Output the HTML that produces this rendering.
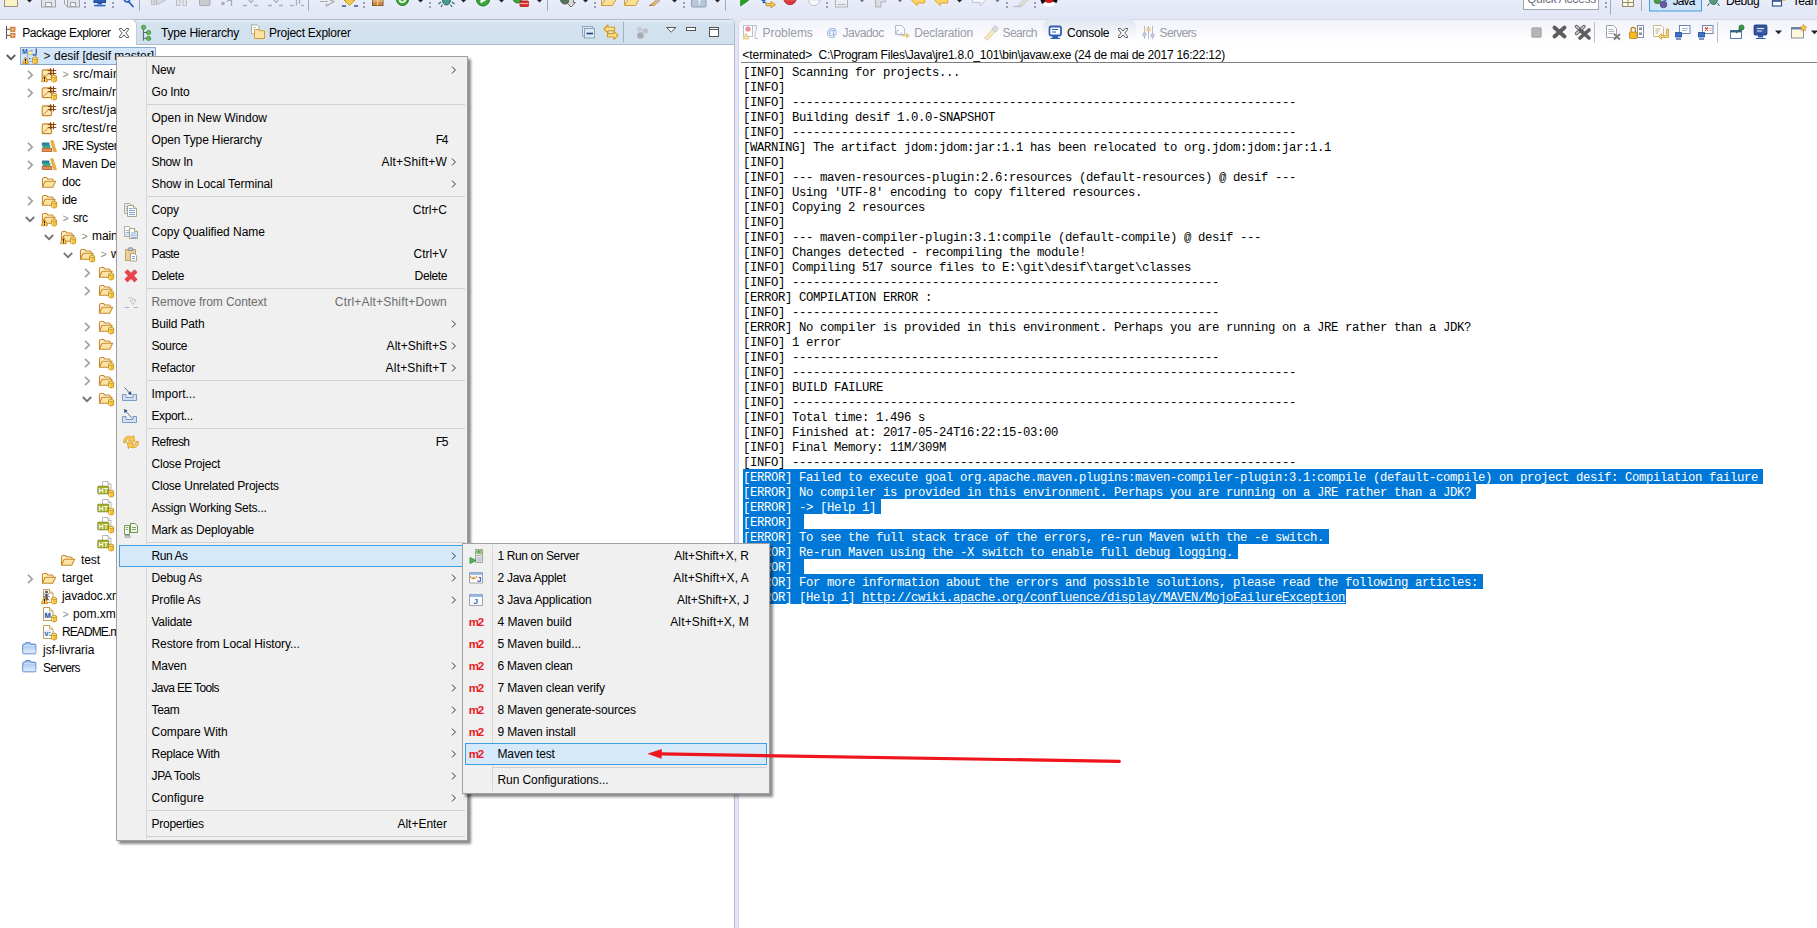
<!DOCTYPE html>
<html><head><meta charset="utf-8"><title>Eclipse</title><style>
html,body{margin:0;padding:0}
body{width:1817px;height:928px;overflow:hidden;position:relative;background:#e1e6f6;font-family:"Liberation Sans",sans-serif;font-size:12px}
.t{position:absolute;white-space:pre}
.ic{position:absolute;width:16px;height:16px}
.ic svg{display:block;overflow:visible}
.abs{position:absolute}
.cl{position:absolute;left:743px;margin-top:2px;white-space:pre;font-family:"Liberation Mono",monospace;font-size:12.300px;letter-spacing:-0.380px;line-height:15px;height:15px;color:#000}
</style></head><body>
<div class="abs" style="left:0;top:0;width:1817px;height:20px;background:linear-gradient(#e9ecf9,#e1e5f5)"></div><svg class="abs" style="left:0;top:0" width="1817" height="20" viewBox="0 0 1817 20"><rect x="4.500" y="-3" width="13" height="9.500" fill="#fbf3c8" stroke="#9b9480" stroke-width="1"/><path d="M27.0 0h5l-2.500 2.600z" fill="#222"/><rect x="41.500" y="-3" width="14" height="10" fill="#e3e4e8" stroke="#a0a2aa" stroke-width="1"/><rect x="45.500" y="2.500" width="6" height="4" fill="#f4f4f6" stroke="#a0a2aa" stroke-width="1"/><path d="M64.500 -3v7l3 2.500" fill="none" stroke="#a0a2aa" stroke-width="1"/><rect x="67.500" y="-3" width="12" height="10" fill="#e3e4e8" stroke="#a0a2aa" stroke-width="1"/><rect x="70.500" y="2.500" width="5" height="4" fill="#f4f4f6" stroke="#a0a2aa" stroke-width="1"/><rect x="84" y="2" width="2" height="2" fill="#9a9fb0"/><rect x="84" y="6" width="2" height="2" fill="#9a9fb0"/><rect x="94" y="-3" width="11.500" height="5.500" fill="#2b5fb8" stroke="#1f4a98" stroke-width="1"/><rect x="97.500" y="3" width="4.500" height="1.500" fill="#2b5fb8"/><rect x="94" y="4.800" width="11.500" height="1.600" fill="#3a6fc8"/><rect x="112" y="2" width="2" height="2" fill="#9a9fb0"/><rect x="112" y="6" width="2" height="2" fill="#9a9fb0"/><path d="M124.500 .5a3.500 3.500 0 0 0 5 .5M128.500 1.500l4.500 5" fill="none" stroke="#2b5fb8" stroke-width="1.800" stroke-linecap="round"/><path d="M139.5 0V10.5" stroke="#a3a7b8" stroke-width="1"/><path d="M151.500 -2v6.500h3.500v-6.500zM156.500 -2v7l9.500-5z" fill="#d9dae0" stroke="#b0b2ba" stroke-width=".8"/><path d="M176.500 -2v7.500h3.500v-7.500zM183 -2v7.500h3.500v-7.500z" fill="#e3e4e8" stroke="#b0b2ba" stroke-width=".8"/><rect x="199.500" y="-3" width="10.500" height="8.500" rx="1" fill="#c9cad0" stroke="#a9abb3" stroke-width="1"/><circle cx="223" cy="3.500" r="1.800" fill="#a9abb3"/><path d="M226.500 1.500l5-2v6.500" fill="none" stroke="#a9abb3" stroke-width="1.300"/><path d="M243 5.500h4M254 5.500h4M248 -1l3 3.500 3-3.500" fill="none" stroke="#b0b2ba" stroke-width="1.300"/><path d="M268 5.500h4M279 5.500h4M273 -1l3 3.500 3-3.500" fill="none" stroke="#b0b2ba" stroke-width="1.300"/><path d="M290 5.500h4M296.500 -1v6.500M299.500 -1v5" fill="none" stroke="#b0b2ba" stroke-width="1.300"/><path d="M301 5.500h3" stroke="#b0b2ba" stroke-width="1.300"/><path d="M308.5 0V10.5" stroke="#a3a7b8" stroke-width="1"/><path d="M320 1.500h8M326.500 -1.500l7.500 3-7.500 4.500v-2.500" fill="#eceef4" stroke="#a9abb3" stroke-width="1.200" stroke-linejoin="round"/><path d="M346.500 -2h6l0 2h2.500l-5.500 5.500-5.500-5.500h2.500z" fill="#f6c94c" stroke="#c28a13" stroke-width=".8"/><path d="M342 6h4M354 6h4" stroke="#35568c" stroke-width="1.400"/><rect x="363" y="2" width="2" height="2" fill="#9a9fb0"/><rect x="363" y="6" width="2" height="2" fill="#9a9fb0"/><rect x="372.500" y="-3" width="10.500" height="8.500" fill="#c98a4a" stroke="#8a5520" stroke-width="1"/><path d="M377.700 -3v8.500M372.500 1h10.500" stroke="#f3d3a3" stroke-width="1"/><circle cx="402.500" cy="-.5" r="6" fill="#3fae3f" stroke="#1f7a1f" stroke-width="1"/><path d="M399.500 -1a3 3 0 0 0 6 .5l-2.500 0" fill="none" stroke="#fff" stroke-width="1.500"/><path d="M418.0 0h5l-2.500 2.600z" fill="#222"/><rect x="429" y="2" width="2" height="2" fill="#9a9fb0"/><rect x="429" y="6" width="2" height="2" fill="#9a9fb0"/><ellipse cx="446.500" cy="0" rx="4" ry="5" fill="#4a9a8a" stroke="#2a6a5a" stroke-width="1"/><path d="M441 2l-2.500 2M452 2l2.500 2M442.500 4.500l-1.500 2.500M450.500 4.500l1.500 2.500" stroke="#2a6a5a" stroke-width="1.100"/><path d="M461.0 0h5l-2.500 2.600z" fill="#222"/><circle cx="483" cy="-.5" r="6.500" fill="#37a737" stroke="#1f7a1f" stroke-width="1"/><path d="M480.500 -4v7.500l6.500-3.800z" fill="#fff"/><path d="M499.0 0h5l-2.500 2.600z" fill="#222"/><circle cx="517.500" cy="-1.500" r="4.500" fill="#37a737" stroke="#1f7a1f" stroke-width=".8"/><rect x="520" y="1" width="8.500" height="5.500" rx=".8" fill="#e03030" stroke="#a81818" stroke-width=".8"/><path d="M520 3.500h8.500" stroke="#fbd0d0" stroke-width=".8"/><path d="M537.0 0h5l-2.500 2.600z" fill="#222"/><path d="M547.5 0V10.5" stroke="#a3a7b8" stroke-width="1"/><circle cx="565" cy="-.5" r="4.500" fill="#4a7a5a" stroke="#555" stroke-width="1"/><path d="M568.500 -1h5l0 3.500h2l-4.500 4.500-4.500-4.500h2z" fill="#d8d8d8" stroke="#555" stroke-width=".8"/><path d="M583.0 0h5l-2.500 2.600z" fill="#222"/><rect x="594" y="2" width="2" height="2" fill="#9a9fb0"/><rect x="594" y="6" width="2" height="2" fill="#9a9fb0"/><path d="M601.5 -2v7.500h11l3.500-6h-11l-3 5" fill="#fbdf93" stroke="#d39b35" stroke-width="1" stroke-linejoin="round"/><path d="M624.5 -2v7.500h11l3.500-6h-11l-3 5" fill="#fbdf93" stroke="#d39b35" stroke-width="1" stroke-linejoin="round"/><path d="M649 5.500l3-1.500 7-6.500 2 1.500-7 6.500z" fill="#f0c060" stroke="#9a7a40" stroke-width=".8"/><path d="M653 -1l6 0 1 4" fill="#b8b8b8"/><path d="M672.0 0h5l-2.500 2.600z" fill="#222"/><rect x="683" y="2" width="2" height="2" fill="#9a9fb0"/><rect x="683" y="6" width="2" height="2" fill="#9a9fb0"/><rect x="691.500" y="-3" width="14.500" height="10" rx="1" fill="#b9c6d8" stroke="#8f9fb8" stroke-width="1"/><path d="M697 -1l3 2-1 4" stroke="#e8eef8" stroke-width="1.300" fill="none"/><path d="M715.0 0h5l-2.500 2.600z" fill="#222"/><path d="M725.5 0V10.5" stroke="#a3a7b8" stroke-width="1"/><path d="M740.500 -3v9l8-5.500z" fill="#22a022" stroke="#167a16" stroke-width=".6"/><path d="M761 -1l5 4M766 -2l-3 5" stroke="#2b5fb8" stroke-width="1.600"/><path d="M766 3.500h5v-2l4.500 3.300-4.500 3v-2h-5z" fill="#f6c94c" stroke="#b98210" stroke-width=".7"/><circle cx="790" cy="-1.500" r="6.200" fill="#d83a3a" stroke="#b02020" stroke-width=".8"/><rect x="785.500" y="-2.500" width="9" height="2.600" fill="#fff"/><path d="M808.500 -2c0 4 1.500 7.500 5.500 7.500s6-3 6-7.500" fill="#fbfbfd" stroke="#b8bac4" stroke-width="1"/><path d="M811.500 -2v3M814.500 -2v3M817.500 -2v3" stroke="#c8cad2" stroke-width=".8"/><rect x="826" y="2" width="2" height="2" fill="#9a9fb0"/><rect x="826" y="6" width="2" height="2" fill="#9a9fb0"/><rect x="835.500" y="-3" width="12" height="10" fill="#eceef4" stroke="#b0b2ba" stroke-width="1"/><path d="M837.500 4.500h8" stroke="#b0b2ba" stroke-width="1"/><path d="M860 0h4l-2 2.200z" fill="#6a6c78"/><path d="M875.500 -2v9h5.500v-5h4.500v-4z" fill="#dcdde2" stroke="#b0b2ba" stroke-width="1"/><path d="M898 0h4l-2 2.200z" fill="#6a6c78"/><path d="M910.5 -1l6.500 6.500l.3-2.500h7.200l.5-4z" fill="#fbd566" stroke="#e0a020" stroke-width="1" stroke-linejoin="round"/><path d="M933.5 -1l6.500 6.500l.3-2.500h7.200l.5-4z" fill="#fbd566" stroke="#e0a020" stroke-width="1" stroke-linejoin="round"/><path d="M957.0 0h5l-2.500 2.600z" fill="#222"/><path d="M972.500 -1v3.500h7.500l.3 3 6.500-6.500z" fill="#f4f5f9" stroke="#bfc1cc" stroke-width="1" stroke-linejoin="round"/><path d="M995.500 0h4l-2 2.200z" fill="#6a6c78"/><rect x="1006" y="2" width="2" height="2" fill="#9a9fb0"/><rect x="1006" y="6" width="2" height="2" fill="#9a9fb0"/><path d="M1013 6.500h9" fill="none" stroke="#c0c2c8" stroke-width="1.200"/><path d="M1018 5.500l6-6.500h5l-6 6.500z" fill="#dcdcd0" stroke="#c8c8c0" stroke-width=".6"/><rect x="1034" y="2" width="2" height="2" fill="#9a9fb0"/><rect x="1034" y="6" width="2" height="2" fill="#9a9fb0"/><path d="M1041 -1a8 8 0 0 0 16 0z" fill="#fff"/><path d="M1043.500 -1a5.500 4 0 0 0 11 0z" fill="#d01818"/><path d="M1040 -1h5.500l-1 3.500-2.500 1.500z" fill="#111"/><path d="M1052.500 -1h5.500l-1.500 4-3-1z" fill="#111"/><rect x="1523.500" y="-8" width="75" height="17.500" fill="#fff" stroke="#9ea3b0" stroke-width="1"/><rect x="1605" y="2" width="2" height="2" fill="#9a9fb0"/><rect x="1605" y="6" width="2" height="2" fill="#9a9fb0"/><path d="M1610.500 0V14.500" stroke="#a3a7b8" stroke-width="1"/><rect x="1622.500" y="-4" width="11" height="10.500" fill="#fdf8e0" stroke="#8f8a70" stroke-width="1"/><path d="M1622.500 2.500h11M1628 -4v10.500" stroke="#8f8a70" stroke-width="1"/><path d="M1641.500 0V11" stroke="#a3a7b8" stroke-width="1"/><rect x="1649.500" y="-8" width="52" height="19" fill="#cfe4f8" stroke="#3d9be0" stroke-width="1"/><circle cx="1657.500" cy=".5" r="3.300" fill="#4a9a4a" stroke="#2a6a2a" stroke-width=".6"/><circle cx="1663.500" cy="4.500" r="3.300" fill="#6a5aa0" stroke="#3a2a70" stroke-width=".6"/><circle cx="1665" cy="-1.500" r="2.500" fill="#4a78c0"/><ellipse cx="1713.500" cy="0" rx="3.800" ry="4.500" fill="#5a9a7a" stroke="#2a6a4a" stroke-width=".9"/><path d="M1709.500 3l-2 3M1717.500 3l2 3M1708.500 -1l-2 0M1718.500 -1l2.500 0" stroke="#2a6a4a" stroke-width="1"/><rect x="1772.500" y="0" width="9" height="6" fill="#fff" stroke="#35568c" stroke-width="1.200"/><path d="M1772.500 1h9" stroke="#35568c" stroke-width="1.600"/><circle cx="1784" cy="-1" r="2" fill="#f0b030"/></svg><span class="t" style='left:1527.00px;top:-8.60px;line-height:16px;font-size:12px;letter-spacing:-0.253px;color:#6a6e7a;'>Quick Access</span><span class="t" style='left:1672.70px;top:-6.70px;line-height:16px;font-size:12px;letter-spacing:-0.890px;color:#000;'>Java</span><span class="t" style='left:1726.00px;top:-6.70px;line-height:16px;font-size:12px;letter-spacing:-0.435px;color:#000;'>Debug</span><span class="t" style='left:1792.50px;top:-6.70px;line-height:16px;font-size:12px;letter-spacing:-0.336px;color:#000;'>Team</span><div class="abs" style="left:-1px;top:19px;width:734px;height:920px;background:#fff;border:1px solid #b6bccc;border-radius:0 5px 0 0;overflow:hidden"><div class="abs" style="left:0;top:0;width:734px;height:24px;background:linear-gradient(#e3edf7 0%,#d4e2ef 18%,#d1e0ee 100%);border-bottom:1px solid #b0bac8"></div></div><div class="abs" style="left:-3px;top:19px;width:140px;height:26px;background:#fff;border:1px solid #c3cad8;border-bottom:none;border-radius:0 6px 0 0;box-sizing:border-box"></div><div class="ic" style="left:5px;top:25px;"><svg width="11" height="15" viewBox="0 0 11 15"><path d="M1.500 1v13M1.500 4.300h4M1.500 10.400h4" stroke="#555" stroke-width="1" fill="none"/><g fill="#d58432" stroke="#b8661c" stroke-width=".5"><rect x="5.500" y="2" width="4.600" height="4.600"/><rect x="5.500" y="8.100" width="4.600" height="4.600"/></g><path d="M5.500 4.300h4.600M7.800 2v4.600M5.500 10.400h4.600M7.800 8.100v4.600" stroke="#f6cfa0" stroke-width=".7"/></svg></div><span class="t" style='left:22.20px;top:24.60px;line-height:16px;font-size:12px;letter-spacing:-0.395px;color:#000;'>Package Explorer</span><svg class="abs" style="left:118px;top:27px" width="12" height="12" viewBox="0 0 12 12"><path d="M1.500 1.500h2.200l2.300 2.600 2.300-2.600h2.200v1.200l-2.700 3.300 2.700 3.300v1.200h-2.200l-2.300-2.600-2.300 2.600h-2.200v-1.200l2.700-3.300-2.700-3.300z" fill="#fff" stroke="#555" stroke-width="1" stroke-linejoin="round"/></svg><div class="ic" style="left:140px;top:24px;"><svg width="12" height="18" viewBox="0 0 12 18"><path d="M3.400 5v11.700M3.400 8.500h4M3.400 14.400h4" stroke="#5a6270" stroke-width="1" fill="none"/><g fill="#62b85a" stroke="#3a8a34" stroke-width=".8"><circle cx="3.600" cy="3.300" r="2.100"/><circle cx="8.600" cy="8.500" r="2.100"/><circle cx="8.600" cy="14.400" r="2.100"/></g></svg></div><span class="t" style='left:160.90px;top:24.60px;line-height:16px;font-size:12px;letter-spacing:-0.172px;color:#000;'>Type Hierarchy</span><div class="ic" style="left:250px;top:24px;"><svg width="16" height="16" viewBox="0 0 16 16"><path d="M1.500 .8h5.500l2 2v7h-7.500z" fill="#fff" stroke="#9a9a9a" stroke-width=".8"/><path d="M3 3.500h3M3 5.500h3" stroke="#b0b0b0" stroke-width=".7"/><path d="M4.500 14.500v-7.800l1-1.200h3l1 1.200h5v7.800z" fill="#fbe3a4" stroke="#d39b35" stroke-width="1" stroke-linejoin="round"/></svg></div><span class="t" style='left:269.00px;top:24.60px;line-height:16px;font-size:12px;letter-spacing:-0.230px;color:#000;'>Project Explorer</span><svg class="abs" style="left:0;top:0" width="734" height="46" viewBox="0 0 734 46"><rect x="582.500" y="26.500" width="10" height="9.500" fill="#dbe7f3" stroke="#93a5bd" stroke-width="1"/><rect x="584.500" y="28.500" width="10" height="9.500" fill="#d9e8f6" stroke="#8ea2bd" stroke-width="1"/><path d="M586.500 33.500h6.500" stroke="#1f3f7a" stroke-width="1.600"/><path d="M604 29l4-4v2.300h6.500v3.400h-6.500v2.300z" fill="#fde58a" stroke="#d9981e" stroke-width="1.100" stroke-linejoin="round"/><path d="M618 35.300l-4 4v-2.300h-6.500v-3.400h6.500v-2.300z" fill="#fde58a" stroke="#d9981e" stroke-width="1.100" stroke-linejoin="round"/><path d="M623.500 21.500v21" stroke="#9fb0c4" stroke-width="1"/><circle cx="639.500" cy="29" r="2.600" fill="#c9ccd2"/><circle cx="645.500" cy="31" r="2.800" fill="#bfc2c8"/><circle cx="640.500" cy="35.500" r="3.300" fill="#a9abb0"/><path d="M666.500 27.500h9.500l-4.750 4.500z" fill="#fff" stroke="#555" stroke-width="1" stroke-linejoin="round"/><rect x="686.500" y="27.500" width="9" height="3" fill="#fff" stroke="#555" stroke-width="1"/><rect x="709.500" y="27.500" width="9" height="9" fill="#fff" stroke="#555" stroke-width="1"/><path d="M709.500 29.500h9" stroke="#555" stroke-width="1"/></svg><div class="abs" style="left:20px;top:47px;width:135px;height:17px;background:#d3e5f8;border:1px solid #8aa8d4;box-sizing:content-box;width:134px;height:16px"></div><svg class="abs" style="left:6px;top:54.0px" width="10" height="7" viewBox="0 0 10 7"><path d="M.8 1l4.200 4.200 4.200-4.200" fill="none" stroke="#5a5a5a" stroke-width="1.800"/></svg><div class="ic" style="left:22px;top:48.0px;"><svg width="16" height="16" viewBox="0 0 16 16"><path d="M5.500 6.500h8.500v7h-8.500z" fill="#cfe2f7" stroke="#86abd9" stroke-width=".8"/><path d="M6.500 3.500h3.500v3h-3.500z" fill="#fdf3c4" stroke="#d8b860" stroke-width=".6"/><path d="M8 2.500h3" stroke="#86abd9" stroke-width="1"/><text x="0" y="5.600" font-family="Liberation Sans, sans-serif" font-weight="700" font-size="6.800" fill="#1f57a8">M</text><path d="M14.300 .5v4.700c0 1.300-.7 1.900-1.800 1.900-.7 0-1.200-.2-1.600-.5" fill="none" stroke="#3a68b0" stroke-width="1.400"/><rect x="7" y="10" width="1.500" height="1.300" fill="#3f78c8"/><g><path d="M10.600 10.300v4.400c0 .7 1 1.200 2.500 1.200s2.500-.5 2.500-1.200v-4.400z" fill="#f6c232" stroke="#bd8a14" stroke-width=".8"/><path d="M11.600 11.500v4" stroke="#fde9a0" stroke-width=".9"/><ellipse cx="13.100" cy="10.300" rx="2.500" ry="1.100" fill="#fde9a0" stroke="#bd8a14" stroke-width=".8"/></g><g><path d="M3.500 9l-3 6q-.3.700.500.700h5q.8 0 .5-.7z" fill="#fcd667" stroke="#c8821a" stroke-width=".9" stroke-linejoin="round"/><rect x="3" y="11" width="1" height="2.500" fill="#2a1a00"/><rect x="3" y="14" width="1" height="1" fill="#2a1a00"/></g></svg></div><span class="t" style='left:43.50px;top:47.50px;line-height:16px;font-size:12px;letter-spacing:-0.816px;color:#222;'>&gt;</span><span class="t" style='left:54.00px;top:47.50px;line-height:16px;font-size:12px;letter-spacing:-0.036px;color:#000;'>desif [desif master]</span><svg class="abs" style="left:27.0px;top:70.0px" width="7" height="10" viewBox="0 0 7 10"><path d="M1 .8l4.200 4.200-4.200 4.200" fill="none" stroke="#a0a0a0" stroke-width="1.700"/></svg><div class="ic" style="left:41px;top:66.0px;"><svg width="16" height="16" viewBox="0 0 16 16"><g><path d="M1.200 12.600v-7.200q0-1.500 1.500-1.500h7.900v8.700q0 1-1 1h-7.400q-1 0-1-1z" fill="#fbe6b4" stroke="#c8862a" stroke-width="1.100" stroke-linejoin="round"/><path d="M1.800 12.800l5.800-5h3" fill="none" stroke="#c8862a" stroke-width=".9"/></g><g fill="none" stroke="#8a4713" stroke-width="1.1"><path d="M6.700 4.500h8.600M6.700 7.500h8.600M9.500 2.300v7M12.500 2.300v7"/></g><g><path d="M10.600 10.300v4.400c0 .7 1 1.200 2.500 1.200s2.500-.5 2.500-1.200v-4.400z" fill="#f6c232" stroke="#bd8a14" stroke-width=".8"/><path d="M11.600 11.500v4" stroke="#fde9a0" stroke-width=".9"/><ellipse cx="13.100" cy="10.300" rx="2.500" ry="1.100" fill="#fde9a0" stroke="#bd8a14" stroke-width=".8"/></g><g><path d="M3.500 9l-3 6q-.3.700.500.700h5q.8 0 .5-.7z" fill="#fcd667" stroke="#c8821a" stroke-width=".9" stroke-linejoin="round"/><rect x="3" y="11" width="1" height="2.500" fill="#2a1a00"/><rect x="3" y="14" width="1" height="1" fill="#2a1a00"/></g></svg></div><span class="t" style='left:62.50px;top:66.10px;line-height:16px;font-size:10.5px;letter-spacing:-0.941px;color:#8a8a8a;'>&gt;</span><span class="t" style='left:73.00px;top:65.50px;line-height:16px;font-size:12px;letter-spacing:0.178px;color:#000;'>src/main/java</span><svg class="abs" style="left:27.0px;top:88.0px" width="7" height="10" viewBox="0 0 7 10"><path d="M1 .8l4.200 4.200-4.200 4.200" fill="none" stroke="#a0a0a0" stroke-width="1.700"/></svg><div class="ic" style="left:41px;top:84.0px;"><svg width="16" height="16" viewBox="0 0 16 16"><g><path d="M1.200 12.600v-7.200q0-1.500 1.500-1.500h7.900v8.700q0 1-1 1h-7.400q-1 0-1-1z" fill="#fbe6b4" stroke="#c8862a" stroke-width="1.100" stroke-linejoin="round"/><path d="M1.800 12.800l5.800-5h3" fill="none" stroke="#c8862a" stroke-width=".9"/></g><g fill="none" stroke="#8a4713" stroke-width="1.1"><path d="M6.700 4.500h8.600M6.700 7.500h8.600M9.500 2.300v7M12.500 2.300v7"/></g><g><path d="M10.600 10.300v4.400c0 .7 1 1.200 2.500 1.200s2.500-.5 2.500-1.200v-4.400z" fill="#f6c232" stroke="#bd8a14" stroke-width=".8"/><path d="M11.600 11.500v4" stroke="#fde9a0" stroke-width=".9"/><ellipse cx="13.100" cy="10.300" rx="2.500" ry="1.100" fill="#fde9a0" stroke="#bd8a14" stroke-width=".8"/></g></svg></div><span class="t" style='left:62.00px;top:83.50px;line-height:16px;font-size:12px;letter-spacing:0.146px;color:#000;'>src/main/resources</span><div class="ic" style="left:41px;top:102.0px;"><svg width="16" height="16" viewBox="0 0 16 16"><g><path d="M1.200 12.600v-7.200q0-1.500 1.500-1.500h7.900v8.700q0 1-1 1h-7.400q-1 0-1-1z" fill="#fbe6b4" stroke="#c8862a" stroke-width="1.100" stroke-linejoin="round"/><path d="M1.800 12.800l5.800-5h3" fill="none" stroke="#c8862a" stroke-width=".9"/></g><g fill="none" stroke="#8a4713" stroke-width="1.1"><path d="M6.700 4.500h8.600M6.700 7.500h8.600M9.500 2.300v7M12.500 2.300v7"/></g></svg></div><span class="t" style='left:62.00px;top:101.50px;line-height:16px;font-size:12px;letter-spacing:0.305px;color:#000;'>src/test/java</span><div class="ic" style="left:41px;top:120.0px;"><svg width="16" height="16" viewBox="0 0 16 16"><g><path d="M1.200 12.600v-7.200q0-1.500 1.500-1.500h7.900v8.700q0 1-1 1h-7.400q-1 0-1-1z" fill="#fbe6b4" stroke="#c8862a" stroke-width="1.100" stroke-linejoin="round"/><path d="M1.800 12.800l5.800-5h3" fill="none" stroke="#c8862a" stroke-width=".9"/></g><g fill="none" stroke="#8a4713" stroke-width="1.1"><path d="M6.700 4.500h8.600M6.700 7.500h8.600M9.500 2.300v7M12.500 2.300v7"/></g></svg></div><span class="t" style='left:62.00px;top:119.50px;line-height:16px;font-size:12px;letter-spacing:0.239px;color:#000;'>src/test/resources</span><svg class="abs" style="left:27.0px;top:142.0px" width="7" height="10" viewBox="0 0 7 10"><path d="M1 .8l4.200 4.200-4.200 4.200" fill="none" stroke="#a0a0a0" stroke-width="1.700"/></svg><div class="ic" style="left:41px;top:138.0px;"><svg width="16" height="16" viewBox="0 0 16 16"><rect x="1.200" y="4.900" width="6.800" height="2.400" fill="#2686a4" stroke="#1a6a88" stroke-width=".6"/><rect x="2" y="7.400" width="7" height="2.600" fill="#3fae94" stroke="#2a8a74" stroke-width=".6"/><rect x="1.200" y="10.400" width="9.600" height="3.200" fill="#e38d56" stroke="#b8622c" stroke-width=".8"/><path d="M9.600 3l2.300-.5 3.600 11.200h-2.700z" fill="#ecb63a" stroke="#d8962a" stroke-width=".7" stroke-linejoin="round"/></svg></div><span class="t" style='left:62.00px;top:137.50px;line-height:16px;font-size:12px;letter-spacing:-0.486px;color:#000;'>JRE System Library [JavaSE-1.8]</span><svg class="abs" style="left:27.0px;top:160.0px" width="7" height="10" viewBox="0 0 7 10"><path d="M1 .8l4.200 4.200-4.200 4.200" fill="none" stroke="#a0a0a0" stroke-width="1.700"/></svg><div class="ic" style="left:41px;top:156.0px;"><svg width="16" height="16" viewBox="0 0 16 16"><rect x="1.200" y="4.900" width="6.800" height="2.400" fill="#2686a4" stroke="#1a6a88" stroke-width=".6"/><rect x="2" y="7.400" width="7" height="2.600" fill="#3fae94" stroke="#2a8a74" stroke-width=".6"/><rect x="1.200" y="10.400" width="9.600" height="3.200" fill="#e38d56" stroke="#b8622c" stroke-width=".8"/><path d="M9.600 3l2.300-.5 3.600 11.200h-2.700z" fill="#ecb63a" stroke="#d8962a" stroke-width=".7" stroke-linejoin="round"/></svg></div><span class="t" style='left:62.00px;top:155.50px;line-height:16px;font-size:12px;letter-spacing:-0.097px;color:#000;'>Maven Dependencies</span><div class="ic" style="left:41px;top:174.0px;"><svg width="16" height="16" viewBox="0 0 16 16"><g transform="translate(.2 1.1) scale(.96 .92)"><path d="M1.300 13.300v-8.800q0-1.800 1.800-1.800h2.600l1.300 1.600h4.200q1.300 0 1.300 1.300v1.200" fill="#fdf0cc" stroke="#c8862a" stroke-width="1.100" stroke-linejoin="round"/><path d="M1.300 13.300l2.300-5.800q.3-.7 1-.7h10.400l-3 6.500z" fill="#fbe3a4" stroke="#c8862a" stroke-width="1.100" stroke-linejoin="round"/></g></svg></div><span class="t" style='left:62.00px;top:173.50px;line-height:16px;font-size:12px;letter-spacing:-0.286px;color:#000;'>doc</span><svg class="abs" style="left:27.0px;top:196.0px" width="7" height="10" viewBox="0 0 7 10"><path d="M1 .8l4.200 4.200-4.200 4.200" fill="none" stroke="#a0a0a0" stroke-width="1.700"/></svg><div class="ic" style="left:41px;top:192.0px;"><svg width="16" height="16" viewBox="0 0 16 16"><g transform="translate(.2 1.1) scale(.96 .92)"><path d="M1.300 13.300v-8.800q0-1.800 1.800-1.800h2.600l1.300 1.600h4.200q1.300 0 1.300 1.300v1.200" fill="#fdf0cc" stroke="#c8862a" stroke-width="1.100" stroke-linejoin="round"/><path d="M1.300 13.300l2.300-5.800q.3-.7 1-.7h9.900l-2.600 6.500z" fill="#fbe3a4" stroke="#c8862a" stroke-width="1.100" stroke-linejoin="round"/></g><g><path d="M10.600 10.300v4.400c0 .7 1 1.200 2.500 1.200s2.500-.5 2.500-1.200v-4.400z" fill="#f6c232" stroke="#bd8a14" stroke-width=".8"/><path d="M11.600 11.500v4" stroke="#fde9a0" stroke-width=".9"/><ellipse cx="13.100" cy="10.300" rx="2.500" ry="1.100" fill="#fde9a0" stroke="#bd8a14" stroke-width=".8"/></g></svg></div><span class="t" style='left:62.00px;top:191.50px;line-height:16px;font-size:12px;letter-spacing:-0.405px;color:#000;'>ide</span><svg class="abs" style="left:24.5px;top:216.0px" width="10" height="7" viewBox="0 0 10 7"><path d="M.8 1l4.200 4.200 4.200-4.200" fill="none" stroke="#747474" stroke-width="1.800"/></svg><div class="ic" style="left:41px;top:210.0px;"><svg width="16" height="16" viewBox="0 0 16 16"><g transform="translate(.2 1.1) scale(.96 .92)"><path d="M1.300 13.300v-8.800q0-1.800 1.800-1.800h2.600l1.300 1.600h4.200q1.300 0 1.300 1.300v1.200" fill="#fdf0cc" stroke="#c8862a" stroke-width="1.100" stroke-linejoin="round"/><path d="M1.300 13.300l2.300-5.800q.3-.7 1-.7h9.900l-2.600 6.500z" fill="#fbe3a4" stroke="#c8862a" stroke-width="1.100" stroke-linejoin="round"/></g><g><path d="M10.600 10.300v4.400c0 .7 1 1.200 2.500 1.200s2.500-.5 2.500-1.200v-4.400z" fill="#f6c232" stroke="#bd8a14" stroke-width=".8"/><path d="M11.600 11.500v4" stroke="#fde9a0" stroke-width=".9"/><ellipse cx="13.100" cy="10.300" rx="2.500" ry="1.100" fill="#fde9a0" stroke="#bd8a14" stroke-width=".8"/></g><g><path d="M3.500 9l-3 6q-.3.700.500.700h5q.8 0 .5-.7z" fill="#fcd667" stroke="#c8821a" stroke-width=".9" stroke-linejoin="round"/><rect x="3" y="11" width="1" height="2.500" fill="#2a1a00"/><rect x="3" y="14" width="1" height="1" fill="#2a1a00"/></g></svg></div><span class="t" style='left:62.50px;top:210.10px;line-height:16px;font-size:10.5px;letter-spacing:-0.941px;color:#8a8a8a;'>&gt;</span><span class="t" style='left:73.00px;top:209.50px;line-height:16px;font-size:12px;letter-spacing:-0.500px;color:#000;'>src</span><svg class="abs" style="left:43.5px;top:234.0px" width="10" height="7" viewBox="0 0 10 7"><path d="M.8 1l4.200 4.200 4.200-4.200" fill="none" stroke="#747474" stroke-width="1.800"/></svg><div class="ic" style="left:60px;top:228.0px;"><svg width="16" height="16" viewBox="0 0 16 16"><g transform="translate(.2 1.1) scale(.96 .92)"><path d="M1.300 13.300v-8.800q0-1.800 1.800-1.800h2.600l1.300 1.600h4.200q1.300 0 1.300 1.300v1.200" fill="#fdf0cc" stroke="#c8862a" stroke-width="1.100" stroke-linejoin="round"/><path d="M1.300 13.300l2.300-5.800q.3-.7 1-.7h9.900l-2.600 6.500z" fill="#fbe3a4" stroke="#c8862a" stroke-width="1.100" stroke-linejoin="round"/></g><g><path d="M10.600 10.300v4.400c0 .7 1 1.200 2.500 1.200s2.500-.5 2.500-1.200v-4.400z" fill="#f6c232" stroke="#bd8a14" stroke-width=".8"/><path d="M11.600 11.500v4" stroke="#fde9a0" stroke-width=".9"/><ellipse cx="13.100" cy="10.300" rx="2.500" ry="1.100" fill="#fde9a0" stroke="#bd8a14" stroke-width=".8"/></g><g><path d="M3.500 9l-3 6q-.3.700.500.700h5q.8 0 .5-.7z" fill="#fcd667" stroke="#c8821a" stroke-width=".9" stroke-linejoin="round"/><rect x="3" y="11" width="1" height="2.500" fill="#2a1a00"/><rect x="3" y="14" width="1" height="1" fill="#2a1a00"/></g></svg></div><span class="t" style='left:81.50px;top:228.10px;line-height:16px;font-size:10.5px;letter-spacing:-0.941px;color:#8a8a8a;'>&gt;</span><span class="t" style='left:92.00px;top:227.50px;line-height:16px;font-size:12px;letter-spacing:-0.098px;color:#000;'>main</span><svg class="abs" style="left:62.5px;top:252.0px" width="10" height="7" viewBox="0 0 10 7"><path d="M.8 1l4.200 4.200 4.200-4.200" fill="none" stroke="#747474" stroke-width="1.800"/></svg><div class="ic" style="left:79px;top:246.0px;"><svg width="16" height="16" viewBox="0 0 16 16"><g transform="translate(.2 1.1) scale(.96 .92)"><path d="M1.300 13.300v-8.800q0-1.800 1.800-1.800h2.600l1.300 1.600h4.200q1.300 0 1.300 1.300v1.200" fill="#fdf0cc" stroke="#c8862a" stroke-width="1.100" stroke-linejoin="round"/><path d="M1.300 13.300l2.300-5.800q.3-.7 1-.7h9.900l-2.600 6.500z" fill="#fbe3a4" stroke="#c8862a" stroke-width="1.100" stroke-linejoin="round"/></g><g><path d="M10.600 10.300v4.400c0 .7 1 1.200 2.500 1.200s2.500-.5 2.500-1.200v-4.400z" fill="#f6c232" stroke="#bd8a14" stroke-width=".8"/><path d="M11.600 11.500v4" stroke="#fde9a0" stroke-width=".9"/><ellipse cx="13.100" cy="10.300" rx="2.500" ry="1.100" fill="#fde9a0" stroke="#bd8a14" stroke-width=".8"/></g></svg></div><span class="t" style='left:100.50px;top:246.10px;line-height:16px;font-size:10.5px;letter-spacing:-0.941px;color:#8a8a8a;'>&gt;</span><span class="t" style='left:111.00px;top:245.50px;line-height:16px;font-size:12px;letter-spacing:-0.105px;color:#000;'>webapp</span><svg class="abs" style="left:84.0px;top:268.0px" width="7" height="10" viewBox="0 0 7 10"><path d="M1 .8l4.200 4.200-4.200 4.200" fill="none" stroke="#a0a0a0" stroke-width="1.700"/></svg><div class="ic" style="left:98px;top:264.0px;"><svg width="16" height="16" viewBox="0 0 16 16"><g transform="translate(.2 1.1) scale(.96 .92)"><path d="M1.300 13.300v-8.800q0-1.800 1.800-1.800h2.600l1.300 1.600h4.200q1.300 0 1.300 1.300v1.200" fill="#fdf0cc" stroke="#c8862a" stroke-width="1.100" stroke-linejoin="round"/><path d="M1.300 13.300l2.300-5.800q.3-.7 1-.7h9.900l-2.600 6.500z" fill="#fbe3a4" stroke="#c8862a" stroke-width="1.100" stroke-linejoin="round"/></g><g><path d="M10.600 10.300v4.400c0 .7 1 1.200 2.500 1.200s2.500-.5 2.500-1.200v-4.400z" fill="#f6c232" stroke="#bd8a14" stroke-width=".8"/><path d="M11.600 11.500v4" stroke="#fde9a0" stroke-width=".9"/><ellipse cx="13.100" cy="10.300" rx="2.500" ry="1.100" fill="#fde9a0" stroke="#bd8a14" stroke-width=".8"/></g></svg></div><svg class="abs" style="left:84.0px;top:286.0px" width="7" height="10" viewBox="0 0 7 10"><path d="M1 .8l4.200 4.200-4.200 4.200" fill="none" stroke="#a0a0a0" stroke-width="1.700"/></svg><div class="ic" style="left:98px;top:282.0px;"><svg width="16" height="16" viewBox="0 0 16 16"><g transform="translate(.2 1.1) scale(.96 .92)"><path d="M1.300 13.300v-8.800q0-1.800 1.800-1.800h2.600l1.300 1.600h4.200q1.300 0 1.300 1.300v1.200" fill="#fdf0cc" stroke="#c8862a" stroke-width="1.100" stroke-linejoin="round"/><path d="M1.300 13.300l2.300-5.800q.3-.7 1-.7h9.900l-2.600 6.500z" fill="#fbe3a4" stroke="#c8862a" stroke-width="1.100" stroke-linejoin="round"/></g><g><path d="M10.600 10.300v4.400c0 .7 1 1.200 2.500 1.200s2.500-.5 2.500-1.200v-4.400z" fill="#f6c232" stroke="#bd8a14" stroke-width=".8"/><path d="M11.600 11.500v4" stroke="#fde9a0" stroke-width=".9"/><ellipse cx="13.100" cy="10.300" rx="2.500" ry="1.100" fill="#fde9a0" stroke="#bd8a14" stroke-width=".8"/></g></svg></div><div class="ic" style="left:98px;top:300.0px;"><svg width="16" height="16" viewBox="0 0 16 16"><g transform="translate(.2 1.1) scale(.96 .92)"><path d="M1.300 13.300v-8.800q0-1.800 1.800-1.800h2.600l1.300 1.600h4.200q1.300 0 1.300 1.300v1.200" fill="#fdf0cc" stroke="#c8862a" stroke-width="1.100" stroke-linejoin="round"/><path d="M1.300 13.300l2.300-5.800q.3-.7 1-.7h10.400l-3 6.500z" fill="#fbe3a4" stroke="#c8862a" stroke-width="1.100" stroke-linejoin="round"/></g></svg></div><svg class="abs" style="left:84.0px;top:322.0px" width="7" height="10" viewBox="0 0 7 10"><path d="M1 .8l4.200 4.200-4.200 4.200" fill="none" stroke="#a0a0a0" stroke-width="1.700"/></svg><div class="ic" style="left:98px;top:318.0px;"><svg width="16" height="16" viewBox="0 0 16 16"><g transform="translate(.2 1.1) scale(.96 .92)"><path d="M1.300 13.300v-8.800q0-1.800 1.800-1.800h2.600l1.300 1.600h4.200q1.300 0 1.300 1.300v1.200" fill="#fdf0cc" stroke="#c8862a" stroke-width="1.100" stroke-linejoin="round"/><path d="M1.300 13.300l2.300-5.800q.3-.7 1-.7h9.900l-2.600 6.500z" fill="#fbe3a4" stroke="#c8862a" stroke-width="1.100" stroke-linejoin="round"/></g><g><path d="M10.600 10.300v4.400c0 .7 1 1.200 2.500 1.200s2.500-.5 2.500-1.200v-4.400z" fill="#f6c232" stroke="#bd8a14" stroke-width=".8"/><path d="M11.600 11.500v4" stroke="#fde9a0" stroke-width=".9"/><ellipse cx="13.100" cy="10.300" rx="2.500" ry="1.100" fill="#fde9a0" stroke="#bd8a14" stroke-width=".8"/></g></svg></div><svg class="abs" style="left:84.0px;top:340.0px" width="7" height="10" viewBox="0 0 7 10"><path d="M1 .8l4.200 4.200-4.200 4.200" fill="none" stroke="#a0a0a0" stroke-width="1.700"/></svg><div class="ic" style="left:98px;top:336.0px;"><svg width="16" height="16" viewBox="0 0 16 16"><g transform="translate(.2 1.1) scale(.96 .92)"><path d="M1.300 13.300v-8.800q0-1.800 1.800-1.800h2.600l1.300 1.600h4.200q1.300 0 1.300 1.300v1.200" fill="#fdf0cc" stroke="#c8862a" stroke-width="1.100" stroke-linejoin="round"/><path d="M1.300 13.300l2.300-5.800q.3-.7 1-.7h10.400l-3 6.500z" fill="#fbe3a4" stroke="#c8862a" stroke-width="1.100" stroke-linejoin="round"/></g></svg></div><svg class="abs" style="left:84.0px;top:358.0px" width="7" height="10" viewBox="0 0 7 10"><path d="M1 .8l4.200 4.200-4.200 4.200" fill="none" stroke="#a0a0a0" stroke-width="1.700"/></svg><div class="ic" style="left:98px;top:354.0px;"><svg width="16" height="16" viewBox="0 0 16 16"><g transform="translate(.2 1.1) scale(.96 .92)"><path d="M1.300 13.300v-8.800q0-1.800 1.800-1.800h2.600l1.300 1.600h4.200q1.300 0 1.300 1.300v1.200" fill="#fdf0cc" stroke="#c8862a" stroke-width="1.100" stroke-linejoin="round"/><path d="M1.300 13.300l2.300-5.800q.3-.7 1-.7h9.900l-2.600 6.500z" fill="#fbe3a4" stroke="#c8862a" stroke-width="1.100" stroke-linejoin="round"/></g><g><path d="M10.600 10.300v4.400c0 .7 1 1.200 2.500 1.200s2.500-.5 2.500-1.200v-4.400z" fill="#f6c232" stroke="#bd8a14" stroke-width=".8"/><path d="M11.600 11.500v4" stroke="#fde9a0" stroke-width=".9"/><ellipse cx="13.100" cy="10.300" rx="2.500" ry="1.100" fill="#fde9a0" stroke="#bd8a14" stroke-width=".8"/></g></svg></div><svg class="abs" style="left:84.0px;top:376.0px" width="7" height="10" viewBox="0 0 7 10"><path d="M1 .8l4.200 4.200-4.200 4.200" fill="none" stroke="#a0a0a0" stroke-width="1.700"/></svg><div class="ic" style="left:98px;top:372.0px;"><svg width="16" height="16" viewBox="0 0 16 16"><g transform="translate(.2 1.1) scale(.96 .92)"><path d="M1.300 13.300v-8.800q0-1.800 1.800-1.800h2.600l1.300 1.600h4.200q1.300 0 1.300 1.300v1.200" fill="#fdf0cc" stroke="#c8862a" stroke-width="1.100" stroke-linejoin="round"/><path d="M1.300 13.300l2.300-5.800q.3-.7 1-.7h9.900l-2.600 6.500z" fill="#fbe3a4" stroke="#c8862a" stroke-width="1.100" stroke-linejoin="round"/></g><g><path d="M10.600 10.300v4.400c0 .7 1 1.200 2.500 1.200s2.500-.5 2.500-1.200v-4.400z" fill="#f6c232" stroke="#bd8a14" stroke-width=".8"/><path d="M11.600 11.500v4" stroke="#fde9a0" stroke-width=".9"/><ellipse cx="13.100" cy="10.300" rx="2.500" ry="1.100" fill="#fde9a0" stroke="#bd8a14" stroke-width=".8"/></g></svg></div><svg class="abs" style="left:81.5px;top:396.0px" width="10" height="7" viewBox="0 0 10 7"><path d="M.8 1l4.200 4.200 4.200-4.200" fill="none" stroke="#747474" stroke-width="1.800"/></svg><div class="ic" style="left:98px;top:390.0px;"><svg width="16" height="16" viewBox="0 0 16 16"><g transform="translate(.2 1.1) scale(.96 .92)"><path d="M1.300 13.300v-8.800q0-1.800 1.800-1.800h2.600l1.300 1.600h4.200q1.300 0 1.300 1.300v1.200" fill="#fdf0cc" stroke="#c8862a" stroke-width="1.100" stroke-linejoin="round"/><path d="M1.300 13.300l2.300-5.800q.3-.7 1-.7h9.900l-2.600 6.500z" fill="#fbe3a4" stroke="#c8862a" stroke-width="1.100" stroke-linejoin="round"/></g><g><path d="M10.600 10.300v4.400c0 .7 1 1.200 2.500 1.200s2.500-.5 2.500-1.200v-4.400z" fill="#f6c232" stroke="#bd8a14" stroke-width=".8"/><path d="M11.600 11.500v4" stroke="#fde9a0" stroke-width=".9"/><ellipse cx="13.100" cy="10.300" rx="2.500" ry="1.100" fill="#fde9a0" stroke="#bd8a14" stroke-width=".8"/></g></svg></div><div class="ic" style="left:98px;top:480.5px;"><svg width="16" height="16" viewBox="0 0 16 16"><path d="M4.500 .5h5.500l3 3v6h-8.500z" fill="#fff" stroke="#a8a8a8" stroke-width=".8"/><path d="M10 .5v3h3" fill="#eee" stroke="#a8a8a8" stroke-width=".8"/><rect x="-.2" y="5.200" width="11" height="7.600" rx=".6" fill="#a2ad22" stroke="#7a8410" stroke-width=".8"/><text x=".6" y="11.600" font-family="Liberation Sans, sans-serif" font-weight="700" font-size="7.200" fill="#fff" textLength="9.400" lengthAdjust="spacingAndGlyphs">HT</text><g><path d="M10.600 10.300v4.400c0 .7 1 1.200 2.500 1.200s2.500-.5 2.500-1.200v-4.400z" fill="#f6c232" stroke="#bd8a14" stroke-width=".8"/><path d="M11.600 11.500v4" stroke="#fde9a0" stroke-width=".9"/><ellipse cx="13.100" cy="10.300" rx="2.500" ry="1.100" fill="#fde9a0" stroke="#bd8a14" stroke-width=".8"/></g></svg></div><div class="ic" style="left:98px;top:498.5px;"><svg width="16" height="16" viewBox="0 0 16 16"><path d="M4.500 .5h5.500l3 3v6h-8.500z" fill="#fff" stroke="#a8a8a8" stroke-width=".8"/><path d="M10 .5v3h3" fill="#eee" stroke="#a8a8a8" stroke-width=".8"/><rect x="-.2" y="5.200" width="11" height="7.600" rx=".6" fill="#a2ad22" stroke="#7a8410" stroke-width=".8"/><text x=".6" y="11.600" font-family="Liberation Sans, sans-serif" font-weight="700" font-size="7.200" fill="#fff" textLength="9.400" lengthAdjust="spacingAndGlyphs">HT</text><g><path d="M10.600 10.300v4.400c0 .7 1 1.200 2.500 1.200s2.500-.5 2.500-1.200v-4.400z" fill="#f6c232" stroke="#bd8a14" stroke-width=".8"/><path d="M11.600 11.500v4" stroke="#fde9a0" stroke-width=".9"/><ellipse cx="13.100" cy="10.300" rx="2.500" ry="1.100" fill="#fde9a0" stroke="#bd8a14" stroke-width=".8"/></g></svg></div><div class="ic" style="left:98px;top:516.5px;"><svg width="16" height="16" viewBox="0 0 16 16"><path d="M4.500 .5h5.500l3 3v6h-8.500z" fill="#fff" stroke="#a8a8a8" stroke-width=".8"/><path d="M10 .5v3h3" fill="#eee" stroke="#a8a8a8" stroke-width=".8"/><rect x="-.2" y="5.200" width="11" height="7.600" rx=".6" fill="#a2ad22" stroke="#7a8410" stroke-width=".8"/><text x=".6" y="11.600" font-family="Liberation Sans, sans-serif" font-weight="700" font-size="7.200" fill="#fff" textLength="9.400" lengthAdjust="spacingAndGlyphs">HT</text><g><path d="M10.600 10.300v4.400c0 .7 1 1.200 2.500 1.200s2.500-.5 2.500-1.200v-4.400z" fill="#f6c232" stroke="#bd8a14" stroke-width=".8"/><path d="M11.600 11.500v4" stroke="#fde9a0" stroke-width=".9"/><ellipse cx="13.100" cy="10.300" rx="2.500" ry="1.100" fill="#fde9a0" stroke="#bd8a14" stroke-width=".8"/></g></svg></div><div class="ic" style="left:98px;top:534.5px;"><svg width="16" height="16" viewBox="0 0 16 16"><path d="M4.500 .5h5.500l3 3v6h-8.500z" fill="#fff" stroke="#a8a8a8" stroke-width=".8"/><path d="M10 .5v3h3" fill="#eee" stroke="#a8a8a8" stroke-width=".8"/><rect x="-.2" y="5.200" width="11" height="7.600" rx=".6" fill="#a2ad22" stroke="#7a8410" stroke-width=".8"/><text x=".6" y="11.600" font-family="Liberation Sans, sans-serif" font-weight="700" font-size="7.200" fill="#fff" textLength="9.400" lengthAdjust="spacingAndGlyphs">HT</text><g><path d="M10.600 10.300v4.400c0 .7 1 1.200 2.500 1.200s2.500-.5 2.500-1.200v-4.400z" fill="#f6c232" stroke="#bd8a14" stroke-width=".8"/><path d="M11.600 11.500v4" stroke="#fde9a0" stroke-width=".9"/><ellipse cx="13.100" cy="10.300" rx="2.500" ry="1.100" fill="#fde9a0" stroke="#bd8a14" stroke-width=".8"/></g></svg></div><div class="ic" style="left:60px;top:552.0px;"><svg width="16" height="16" viewBox="0 0 16 16"><g transform="translate(.2 1.1) scale(.96 .92)"><path d="M1.300 13.300v-8.800q0-1.800 1.800-1.800h2.600l1.300 1.600h4.200q1.300 0 1.300 1.300v1.200" fill="#fdf0cc" stroke="#c8862a" stroke-width="1.100" stroke-linejoin="round"/><path d="M1.300 13.300l2.300-5.800q.3-.7 1-.7h10.400l-3 6.500z" fill="#fbe3a4" stroke="#c8862a" stroke-width="1.100" stroke-linejoin="round"/></g></svg></div><span class="t" style='left:81.00px;top:551.50px;line-height:16px;font-size:12px;letter-spacing:-0.086px;color:#000;'>test</span><svg class="abs" style="left:27.0px;top:574.0px" width="7" height="10" viewBox="0 0 7 10"><path d="M1 .8l4.200 4.200-4.200 4.200" fill="none" stroke="#a0a0a0" stroke-width="1.700"/></svg><div class="ic" style="left:41px;top:570.0px;"><svg width="16" height="16" viewBox="0 0 16 16"><g transform="translate(.2 1.1) scale(.96 .92)"><path d="M1.300 13.300v-8.800q0-1.800 1.800-1.800h2.600l1.300 1.600h4.200q1.300 0 1.300 1.300v1.200" fill="#fdf0cc" stroke="#c8862a" stroke-width="1.100" stroke-linejoin="round"/><path d="M1.300 13.300l2.300-5.800q.3-.7 1-.7h10.400l-3 6.500z" fill="#fbe3a4" stroke="#c8862a" stroke-width="1.100" stroke-linejoin="round"/></g></svg></div><span class="t" style='left:62.00px;top:569.50px;line-height:16px;font-size:12px;letter-spacing:0.052px;color:#000;'>target</span><div class="ic" style="left:41px;top:588.0px;"><svg width="16" height="16" viewBox="0 0 16 16"><path d="M2.500 1.500h6l3.500 3.500v9.500h-9.500z" fill="#fff" stroke="#c0a058" stroke-width="1"/><path d="M8.500 1.500v3.500h3.500" fill="#f6efd8" stroke="#c0a058" stroke-width=".9"/><g fill="#555"><circle cx="5.500" cy="4" r="1.500"/><ellipse cx="5.500" cy="7.300" rx="1.200" ry="1.600"/><ellipse cx="5.500" cy="10.800" rx="1.600" ry="2"/><path d="M2.500 5.500l3 2M8.500 5.500l-3 2M2.300 8.500h6.400M2.500 12.500l3-3M8.500 12.500l-3-3" stroke="#555" stroke-width=".7" fill="none"/></g><g><path d="M10.600 10.300v4.400c0 .7 1 1.200 2.500 1.200s2.500-.5 2.500-1.200v-4.400z" fill="#f6c232" stroke="#bd8a14" stroke-width=".8"/><path d="M11.600 11.500v4" stroke="#fde9a0" stroke-width=".9"/><ellipse cx="13.100" cy="10.300" rx="2.500" ry="1.100" fill="#fde9a0" stroke="#bd8a14" stroke-width=".8"/></g><g><path d="M3.500 9l-3 6q-.3.700.500.700h5q.8 0 .5-.7z" fill="#fcd667" stroke="#c8821a" stroke-width=".9" stroke-linejoin="round"/><rect x="3" y="11" width="1" height="2.500" fill="#2a1a00"/><rect x="3" y="14" width="1" height="1" fill="#2a1a00"/></g></svg></div><span class="t" style='left:62.00px;top:587.50px;line-height:16px;font-size:12px;letter-spacing:-0.086px;color:#000;'>javadoc.xml</span><div class="ic" style="left:41px;top:606.0px;"><svg width="16" height="16" viewBox="0 0 16 16"><path d="M2.500 1.500h6l3.500 3.500v9.500h-9.500z" fill="#fff" stroke="#c0a058" stroke-width="1"/><path d="M8.500 1.500v3.500h3.500" fill="#f6efd8" stroke="#c0a058" stroke-width=".9"/><rect x="3.500" y="6" width="6.500" height="6" fill="#dbe9fb"/><text x="3.400" y="12" font-family="Liberation Sans, sans-serif" font-weight="700" font-size="7.500" fill="#1f4f9a">M</text><g><path d="M10.600 10.300v4.400c0 .7 1 1.200 2.500 1.200s2.500-.5 2.500-1.200v-4.400z" fill="#f6c232" stroke="#bd8a14" stroke-width=".8"/><path d="M11.600 11.500v4" stroke="#fde9a0" stroke-width=".9"/><ellipse cx="13.100" cy="10.300" rx="2.500" ry="1.100" fill="#fde9a0" stroke="#bd8a14" stroke-width=".8"/></g></svg></div><span class="t" style='left:62.50px;top:606.10px;line-height:16px;font-size:10.5px;letter-spacing:-0.941px;color:#8a8a8a;'>&gt;</span><span class="t" style='left:73.00px;top:605.50px;line-height:16px;font-size:12px;letter-spacing:0.022px;color:#000;'>pom.xml</span><div class="ic" style="left:41px;top:624.0px;"><svg width="16" height="16" viewBox="0 0 16 16"><path d="M2.500 1.500h6l3.500 3.500v9.500h-9.500z" fill="#fff" stroke="#c0a058" stroke-width="1"/><path d="M8.500 1.500v3.500h3.500" fill="#f6efd8" stroke="#c0a058" stroke-width=".9"/><rect x="3.500" y="6" width="6.500" height="6" fill="#e6f0fb"/><text x="3.600" y="11.600" font-family="Liberation Sans, sans-serif" font-weight="700" font-size="7" fill="#2a5aa8">v:</text><g><path d="M10.600 10.300v4.400c0 .7 1 1.200 2.500 1.200s2.500-.5 2.500-1.200v-4.400z" fill="#f6c232" stroke="#bd8a14" stroke-width=".8"/><path d="M11.600 11.500v4" stroke="#fde9a0" stroke-width=".9"/><ellipse cx="13.100" cy="10.300" rx="2.500" ry="1.100" fill="#fde9a0" stroke="#bd8a14" stroke-width=".8"/></g></svg></div><span class="t" style='left:62.00px;top:623.50px;line-height:16px;font-size:12px;letter-spacing:-0.927px;color:#000;'>README.md</span><div class="ic" style="left:22px;top:642.0px;"><svg width="16" height="16" viewBox="0 0 16 16"><g transform="translate(0 -.8)"><path d="M.8 11.800v-8q0-.8.800-.8h1.100l1-1.500h4.300l1 1.500h4q.8 0 .8.800v8q0 .8-.8.800h-11.400q-.8 0-.8-.8z" fill="#a9c9f0" stroke="#4f7fc4" stroke-width="1" stroke-linejoin="round"/><path d="M1.400 6.200h12v5.800h-12z" fill="#bfd8f5"/><path d="M1.400 9h12v3h-12z" fill="#d4e6fa"/><path d="M1.400 4.600h12" stroke="#dbe9fa" stroke-width=".9"/></g></svg></div><span class="t" style='left:43.00px;top:641.50px;line-height:16px;font-size:12px;letter-spacing:0.013px;color:#000;'>jsf-livraria</span><div class="ic" style="left:22px;top:660.0px;"><svg width="16" height="16" viewBox="0 0 16 16"><g transform="translate(0 -.8)"><path d="M.8 11.800v-8q0-.8.800-.8h1.100l1-1.500h4.300l1 1.500h4q.8 0 .8.800v8q0 .8-.8.800h-11.400q-.8 0-.8-.8z" fill="#a9c9f0" stroke="#4f7fc4" stroke-width="1" stroke-linejoin="round"/><path d="M1.400 6.200h12v5.800h-12z" fill="#bfd8f5"/><path d="M1.400 9h12v3h-12z" fill="#d4e6fa"/><path d="M1.400 4.600h12" stroke="#dbe9fa" stroke-width=".9"/></g></svg></div><span class="t" style='left:43.00px;top:659.50px;line-height:16px;font-size:12px;letter-spacing:-0.621px;color:#000;'>Servers</span><div class="abs" style="left:738px;top:19px;width:1090px;height:920px;background:#fff;border:1px solid #d3d7e6;border-radius:6px 0 0 0;overflow:hidden"><div class="abs" style="left:0;top:0;width:1090px;height:25px;background:linear-gradient(#f1f3fa,#fbfbfe 60%,#fff)"></div></div><div class="abs" style="left:1043px;top:19px;width:93px;height:26px;border-radius:8px 8px 0 0;background:linear-gradient(#dfe5ef,#f0f3f8 45%,#fff 85%)"></div><span class="t" style='left:762.60px;top:24.60px;line-height:16px;font-size:12px;letter-spacing:-0.061px;color:#989ca6;'>Problems</span><span class="t" style='left:826.00px;top:24.30px;line-height:16px;font-size:11px;letter-spacing:-1.672px;color:#7ea6d6;font-style:italic;'>@</span><span class="t" style='left:842.50px;top:24.60px;line-height:16px;font-size:12px;letter-spacing:-0.486px;color:#989ca6;'>Javadoc</span><span class="t" style='left:914.20px;top:24.60px;line-height:16px;font-size:12px;letter-spacing:-0.173px;color:#989ca6;'>Declaration</span><span class="t" style='left:1002.50px;top:24.60px;line-height:16px;font-size:12px;letter-spacing:-0.605px;color:#989ca6;'>Search</span><span class="t" style='left:1067.00px;top:24.60px;line-height:16px;font-size:12px;letter-spacing:-0.247px;color:#000;'>Console</span><span class="t" style='left:1159.60px;top:24.60px;line-height:16px;font-size:12px;letter-spacing:-0.678px;color:#989ca6;'>Servers</span><svg class="abs" style="left:0;top:0" width="1817" height="46" viewBox="0 0 1817 46"><g opacity=".55"><rect x="743.500" y="25.500" width="9" height="11" fill="#fff" stroke="#8a93a8" stroke-width="1"/><circle cx="748" cy="29" r="2.600" fill="#e03a4a"/><path d="M753 25.500h3.500c0 6-2 8-1.500 13h3" fill="none" stroke="#8a93a8" stroke-width="1"/><path d="M746 33l-3 6h6z" fill="#f6c94c" stroke="#c8901a" stroke-width=".7"/></g><g opacity=".6"><path d="M895.500 25.500h6l3 3v6h-9z" fill="#fff" stroke="#8a93a8" stroke-width="1"/><path d="M899 30a2.500 2.500 0 1 0 2.500 2.500" fill="none" stroke="#6f86b0" stroke-width="1"/><path d="M901 35.500h7.500l-2.500-2.500M908.500 35.500l-2.500 2.500" fill="none" stroke="#d8a030" stroke-width="1.300"/></g><g opacity=".6"><path d="M984.500 38l8-9 3 2.500-8 8.500z" fill="#f3dc9a" stroke="#c8a850" stroke-width=".8"/><path d="M992 29l3-3.500 3.500 3-3 3.500z" fill="#c8c8d0" stroke="#9a9aa8" stroke-width=".8"/></g><rect x="1049.500" y="26.500" width="11.500" height="9" rx="1.500" fill="#fff" stroke="#2f5fb0" stroke-width="1.800"/><path d="M1052 29.500h6M1052 32h4" stroke="#2f5fb0" stroke-width="1"/><path d="M1053 36.500h4.500v1.500h-4.500zM1050.500 38.500h9.500" stroke="#2f5fb0" stroke-width="1.200" fill="#2f5fb0"/><path d="M1118.500 28.500h2.200l2.300 2.600 2.300-2.600h2.200v1.200l-2.700 3.300 2.700 3.300v1.200h-2.200l-2.300-2.600-2.300 2.600h-2.200v-1.200l2.700-3.300-2.700-3.300z" fill="#fff" stroke="#555" stroke-width="1" stroke-linejoin="round"/><g opacity=".6"><path d="M1144.500 26v13M1148.500 26v13M1152.500 26v13" stroke="#8a93a8" stroke-width="1"/><rect x="1143" y="33" width="3" height="3" fill="#9ab0d0" stroke="#6f86b0" stroke-width=".6"/><rect x="1147" y="28" width="3" height="3" fill="#f0c050" stroke="#c8901a" stroke-width=".6"/><rect x="1151" y="34" width="3" height="3" fill="#9ab0d0" stroke="#6f86b0" stroke-width=".6"/></g><rect x="1531" y="27" width="11" height="11" rx="1.500" fill="#dcdcdc"/><rect x="1532" y="28" width="9" height="9" rx="1" fill="#b6b6b6" stroke="#a2a2a2" stroke-width="1"/><path d="M1554.500 27.500l10 9M1564.500 27.500l-10 9" stroke="#5e5e5e" stroke-width="4" stroke-linecap="round"/><path d="M1576.500 26.500l7.500 7M1584 26.500l-7.500 7" stroke="#5a5a5a" stroke-width="3.400" stroke-linecap="round"/><path d="M1576.500 26.500l7.500 7M1584 26.500l-7.500 7" stroke="#d8d8d8" stroke-width="1.600" stroke-linecap="round"/><path d="M1580 30l9 8M1589 30l-9 8" stroke="#5e5e5e" stroke-width="3.600" stroke-linecap="round"/><path d="M1594.500 22v20.500M1717.500 22v20.500" stroke="#b9bfcc" stroke-width="1"/><path d="M1606.500 25.500h7l3 3v9h-10z" fill="#fff" stroke="#9aa0ae" stroke-width="1"/><path d="M1608.500 29.500h5M1608.500 31.500h6M1608.500 33.500h6" stroke="#a0a6b4" stroke-width=".8"/><path d="M1614 34l6 5.500M1620 34l-6 5.500" stroke="#7a7a7a" stroke-width="1.800"/><rect x="1637.500" y="25.500" width="6" height="12" fill="#fff" stroke="#8a8f9c" stroke-width="1"/><rect x="1639" y="27.500" width="3" height="2.500" fill="#8a8f9c"/><rect x="1639" y="32.500" width="3" height="2.500" fill="#8a8f9c"/><path d="M1631 32v-2.500a2.200 2.200 0 0 1 4.400 0v2.500" fill="none" stroke="#b98210" stroke-width="1.200"/><rect x="1629.500" y="32" width="7.500" height="6.500" rx=".8" fill="#f5b921" stroke="#b98210" stroke-width=".8"/><path d="M1653.500 25.500h8l2 2v9h-10z" fill="#fff" stroke="#c8b890" stroke-width="1"/><path d="M1655.500 29h5M1655.500 31h4M1655.500 33h3" stroke="#b0a078" stroke-width=".8"/><path d="M1666.500 29v6.500h-5v-2l-3 3 3 3v-2h7v-8.500z" fill="#f6d67a" stroke="#c8a030" stroke-width=".8" stroke-linejoin="round"/><rect x="1679.500" y="25.500" width="10.500" height="8" fill="#fff" stroke="#6f86b0" stroke-width="1"/><path d="M1682 28.500h6M1682 30.500h5" stroke="#9aa8c0" stroke-width=".8"/><rect x="1675.500" y="32.500" width="6" height="4.500" fill="#3a6fc8" stroke="#2a4f9a" stroke-width=".8"/><path d="M1676 39h5" stroke="#2a4f9a" stroke-width="1.200"/><rect x="1702.500" y="25.500" width="10.500" height="8" fill="#fff" stroke="#6f86b0" stroke-width="1"/><path d="M1705 27.500l3 3M1708 27.500l-3 3" stroke="#e03030" stroke-width="1.400"/><path d="M1709.500 28.500h2M1709.500 30.500h2" stroke="#e07070" stroke-width=".8"/><rect x="1698.500" y="32.500" width="6" height="4.500" fill="#3a6fc8" stroke="#2a4f9a" stroke-width=".8"/><path d="M1699 39h5" stroke="#2a4f9a" stroke-width="1.200"/><rect x="1730.500" y="30.500" width="11" height="8" fill="#fff" stroke="#5a7ab0" stroke-width="1"/><path d="M1730.500 31.500h11" stroke="#35568c" stroke-width="1.800"/><path d="M1736 33l4-4" stroke="#2a7a3a" stroke-width="1.300"/><circle cx="1741.500" cy="27.500" r="2.600" fill="#3a9a4a" stroke="#1f6a2a" stroke-width=".7"/><rect x="1754.500" y="25.500" width="12" height="9" rx="1" fill="#3a5fa8" stroke="#2a4a90" stroke-width="1.800"/><path d="M1757 28.500h7M1757 31h5" stroke="#dfe8f8" stroke-width="1"/><path d="M1758.500 35.500h4v1.500h-4zM1756 38.500h9.500" stroke="#2f5fb0" stroke-width="1.200" fill="#2f5fb0"/><path d="M1775 30.500h7l-3.500 3.800z" fill="#222"/><rect x="1791.500" y="27.500" width="12" height="10.500" fill="#fdf6d8" stroke="#8a90a0" stroke-width="1"/><path d="M1791.500 28.500h12" stroke="#5a7ab0" stroke-width="1.800"/><path d="M1803.500 24l1 2.500 2.500.5-2 1.500.5 2.500-2-1.500-2 1.500.5-2.500-2-1.500 2.500-.5z" fill="#f6c94c" stroke="#c8901a" stroke-width=".6"/><path d="M1811 30.500h7l-3.500 3.800z" fill="#222"/></svg><span class="t" style='left:742.30px;top:47.00px;line-height:16px;font-size:12px;letter-spacing:-0.060px;color:#000;'>&lt;terminated&gt;</span><span class="t" style='left:818.60px;top:47.00px;line-height:16px;font-size:12px;letter-spacing:-0.241px;color:#000;'>C:\Program Files\Java\jre1.8.0_101\bin\javaw.exe (24 de mai de 2017 16:22:12)</span><div class="abs" style="left:741px;top:62px;width:1076px;height:1px;background:#7f7f7f"></div><div class="cl" style="top:64px">[INFO] Scanning for projects...</div><div class="cl" style="top:79px">[INFO] </div><div class="cl" style="top:94px">[INFO] ------------------------------------------------------------------------</div><div class="cl" style="top:109px">[INFO] Building desif 1.0.0-SNAPSHOT</div><div class="cl" style="top:124px">[INFO] ------------------------------------------------------------------------</div><div class="cl" style="top:139px">[WARNING] The artifact jdom:jdom:jar:1.1 has been relocated to org.jdom:jdom:jar:1.1</div><div class="cl" style="top:154px">[INFO] </div><div class="cl" style="top:169px">[INFO] --- maven-resources-plugin:2.6:resources (default-resources) @ desif ---</div><div class="cl" style="top:184px">[INFO] Using 'UTF-8' encoding to copy filtered resources.</div><div class="cl" style="top:199px">[INFO] Copying 2 resources</div><div class="cl" style="top:214px">[INFO] </div><div class="cl" style="top:229px">[INFO] --- maven-compiler-plugin:3.1:compile (default-compile) @ desif ---</div><div class="cl" style="top:244px">[INFO] Changes detected - recompiling the module!</div><div class="cl" style="top:259px">[INFO] Compiling 517 source files to E:\git\desif\target\classes</div><div class="cl" style="top:274px">[INFO] -------------------------------------------------------------</div><div class="cl" style="top:289px">[ERROR] COMPILATION ERROR : </div><div class="cl" style="top:304px">[INFO] -------------------------------------------------------------</div><div class="cl" style="top:319px">[ERROR] No compiler is provided in this environment. Perhaps you are running on a JRE rather than a JDK?</div><div class="cl" style="top:334px">[INFO] 1 error</div><div class="cl" style="top:349px">[INFO] -------------------------------------------------------------</div><div class="cl" style="top:364px">[INFO] ------------------------------------------------------------------------</div><div class="cl" style="top:379px">[INFO] BUILD FAILURE</div><div class="cl" style="top:394px">[INFO] ------------------------------------------------------------------------</div><div class="cl" style="top:409px">[INFO] Total time: 1.496 s</div><div class="cl" style="top:424px">[INFO] Finished at: 2017-05-24T16:22:15-03:00</div><div class="cl" style="top:439px">[INFO] Final Memory: 11M/309M</div><div class="cl" style="top:454px">[INFO] ------------------------------------------------------------------------</div><div class="abs" style="left:743px;top:469px;width:1019.5px;height:15px;background:#0078d7"></div><div class="abs" style="left:743px;top:484px;width:732.5px;height:15px;background:#0078d7"></div><div class="abs" style="left:743px;top:499px;width:137.5px;height:15px;background:#0078d7"></div><div class="abs" style="left:743px;top:514px;width:60.5px;height:15px;background:#0078d7"></div><div class="abs" style="left:743px;top:529px;width:585.5px;height:15px;background:#0078d7"></div><div class="abs" style="left:743px;top:544px;width:494.5px;height:15px;background:#0078d7"></div><div class="abs" style="left:743px;top:559px;width:60.5px;height:15px;background:#0078d7"></div><div class="abs" style="left:743px;top:574px;width:739.5px;height:15px;background:#0078d7"></div><div class="abs" style="left:743px;top:589px;width:603.0px;height:15px;background:#0078d7"></div><div class="cl" style="top:469px;color:#fff">[ERROR] Failed to execute goal org.apache.maven.plugins:maven-compiler-plugin:3.1:compile (default-compile) on project desif: Compilation failure</div><div class="cl" style="top:484px;color:#fff">[ERROR] No compiler is provided in this environment. Perhaps you are running on a JRE rather than a JDK?</div><div class="cl" style="top:499px;color:#fff">[ERROR] -&gt; [Help 1]</div><div class="cl" style="top:514px;color:#fff">[ERROR] </div><div class="cl" style="top:529px;color:#fff">[ERROR] To see the full stack trace of the errors, re-run Maven with the -e switch.</div><div class="cl" style="top:544px;color:#fff">[ERROR] Re-run Maven using the -X switch to enable full debug logging.</div><div class="cl" style="top:559px;color:#fff">[ERROR] </div><div class="cl" style="top:574px;color:#fff">[ERROR] For more information about the errors and possible solutions, please read the following articles:</div><div class="cl" style="top:589px;color:#fff">[ERROR] [Help 1] <span style="text-decoration:underline">http://cwiki.apache.org/confluence/display/MAVEN/MojoFailureException</span></div><div class="abs" style="left:116px;top:56px;width:350px;height:783px;background:#f0f0f0;border:1px solid #a0a0a0;box-shadow:3px 3px 2.500px 0 rgba(0,0,0,.46)"></div><div class="abs" style="left:146px;top:58px;width:1px;height:781px;background:#d7d7d7"></div><span class="t" style='left:151.50px;top:61.50px;line-height:16px;font-size:12px;letter-spacing:-0.172px;color:#000;'>New</span><svg class="abs" style="left:451px;top:66.0px" width="6" height="8" viewBox="0 0 6 8"><path d="M1 .6l3.400 3.400-3.400 3.400" fill="none" stroke="#333" stroke-width="1"/></svg><span class="t" style='left:151.50px;top:83.50px;line-height:16px;font-size:12px;letter-spacing:-0.208px;color:#000;'>Go Into</span><div class="abs" style="left:147px;top:104px;width:318px;height:1px;background:#d0d0d0"></div><span class="t" style='left:151.50px;top:109.50px;line-height:16px;font-size:12px;letter-spacing:0.006px;color:#000;'>Open in New Window</span><span class="t" style='left:151.50px;top:131.50px;line-height:16px;font-size:12px;letter-spacing:-0.146px;color:#000;'>Open Type Hierarchy</span><span class="t" style='left:435.70px;top:131.50px;line-height:16px;font-size:12px;letter-spacing:-1.358px;color:#000;'>F4</span><span class="t" style='left:151.50px;top:153.50px;line-height:16px;font-size:12px;letter-spacing:-0.337px;color:#000;'>Show In</span><span class="t" style='left:381.50px;top:153.50px;line-height:16px;font-size:12px;letter-spacing:0.195px;color:#000;'>Alt+Shift+W</span><svg class="abs" style="left:451px;top:158.0px" width="6" height="8" viewBox="0 0 6 8"><path d="M1 .6l3.400 3.400-3.400 3.400" fill="none" stroke="#333" stroke-width="1"/></svg><span class="t" style='left:151.50px;top:175.50px;line-height:16px;font-size:12px;letter-spacing:-0.090px;color:#000;'>Show in Local Terminal</span><svg class="abs" style="left:451px;top:180.0px" width="6" height="8" viewBox="0 0 6 8"><path d="M1 .6l3.400 3.400-3.400 3.400" fill="none" stroke="#333" stroke-width="1"/></svg><div class="abs" style="left:147px;top:196px;width:318px;height:1px;background:#d0d0d0"></div><div class="ic" style="left:123px;top:202px;"><svg width="16" height="16" viewBox="0 0 16 16"><path d="M1.500 1.500h5.500l2.500 2.500v7.500h-8z" fill="#e9f0f8" stroke="#a8a488" stroke-width=".9"/><path d="M2.800 4.500h1.500M2.800 6.500h1.500M2.800 8.500h1.500" stroke="#7fa3d0" stroke-width=".8"/><path d="M4.500 3.500h6l3 3v8h-9z" fill="#fff" stroke="#9f9b80" stroke-width=".9"/><path d="M10.500 3.500v3h3" fill="#f4ecc0" stroke="#9f9b80" stroke-width=".8"/><path d="M6 8.500h6M6 10.500h6M6 12.500h6M6 6.500h3.500" stroke="#6a98d0" stroke-width=".9"/></svg></div><span class="t" style='left:151.50px;top:201.50px;line-height:16px;font-size:12px;letter-spacing:-0.204px;color:#000;'>Copy</span><span class="t" style='left:412.80px;top:201.50px;line-height:16px;font-size:12px;letter-spacing:-0.024px;color:#000;'>Ctrl+C</span><div class="ic" style="left:123px;top:224px;"><svg width="16" height="16" viewBox="0 0 16 16"><path d="M1.500 2.500h4.500l2.500 2.500v7.500h-7z" fill="#fff" stroke="#a8a488" stroke-width=".9"/><path d="M2.800 6.500h4M2.800 8.500h4" stroke="#7fa3d0" stroke-width=".9"/><path d="M2 9.500h6v2h-6z" fill="#c4d6ec"/><path d="M6.500 4.500h5l3 3v7h-8z" fill="#fff" stroke="#9f9b80" stroke-width=".9"/><path d="M11.500 4.500v3h3" fill="#f4ecc0" stroke="#9f9b80" stroke-width=".8"/><path d="M8 9h5.500M8 13.300h5.500" stroke="#6a98d0" stroke-width=".9"/><path d="M7.200 10.300h6.600v2h-6.600z" fill="#b4cbe8"/></svg></div><span class="t" style='left:151.50px;top:223.50px;line-height:16px;font-size:12px;letter-spacing:-0.035px;color:#000;'>Copy Qualified Name</span><div class="ic" style="left:123px;top:246px;"><svg width="16" height="16" viewBox="0 0 16 16"><path d="M2.500 3.500h10v11h-10z" fill="#eccf98" stroke="#c09a58" stroke-width=".9"/><path d="M5 3.500q0-2 2.500-2t2.500 2v1h-5z" fill="#b8bcc8" stroke="#8a8e9c" stroke-width=".8"/><path d="M7.500 7.500h4l2 2v5.500h-6z" fill="#fff" stroke="#9f9b80" stroke-width=".9"/><path d="M9 10.500h3M9 12.500h3" stroke="#6a98d0" stroke-width=".9"/></svg></div><span class="t" style='left:151.50px;top:245.50px;line-height:16px;font-size:12px;letter-spacing:-0.617px;color:#000;'>Paste</span><span class="t" style='left:413.60px;top:245.50px;line-height:16px;font-size:12px;letter-spacing:-0.048px;color:#000;'>Ctrl+V</span><div class="ic" style="left:123px;top:268px;"><svg width="16" height="16" viewBox="0 0 16 16"><path d="M2.300 4.300l2.200-2.200L8 5.600l3.500-3.500 2.200 2.200L10.200 7.800l3.500 3.500-2.200 2.200L8 10l-3.500 3.500-2.200-2.200L5.800 7.800z" fill="#e9444e" stroke="#e9444e" stroke-width="1.300" stroke-linejoin="round"/></svg></div><span class="t" style='left:151.50px;top:267.50px;line-height:16px;font-size:12px;letter-spacing:-0.348px;color:#000;'>Delete</span><span class="t" style='left:414.60px;top:267.50px;line-height:16px;font-size:12px;letter-spacing:-0.381px;color:#000;'>Delete</span><div class="abs" style="left:147px;top:288px;width:318px;height:1px;background:#d0d0d0"></div><div class="ic" style="left:123px;top:294px;"><svg width="16" height="16" viewBox="0 0 16 16"><path d="M5.500 5c.5-2 4-2 4.500.2l-1 .8h4l-3 4.500-3-4.500h1" fill="#f6f6f6" stroke="#b4b4b4" stroke-width=".9" stroke-linejoin="round"/><path d="M2 13.500h4M11 13.500h4" stroke="#b0b0b0" stroke-width="1"/></svg></div><span class="t" style='left:151.50px;top:293.50px;line-height:16px;font-size:12px;letter-spacing:-0.075px;color:#6d6d6d;'>Remove from Context</span><span class="t" style='left:334.80px;top:293.50px;line-height:16px;font-size:12px;letter-spacing:0.200px;color:#6d6d6d;'>Ctrl+Alt+Shift+Down</span><span class="t" style='left:151.50px;top:315.50px;line-height:16px;font-size:12px;letter-spacing:-0.170px;color:#000;'>Build Path</span><svg class="abs" style="left:451px;top:320.0px" width="6" height="8" viewBox="0 0 6 8"><path d="M1 .6l3.400 3.400-3.400 3.400" fill="none" stroke="#333" stroke-width="1"/></svg><span class="t" style='left:151.50px;top:337.50px;line-height:16px;font-size:12px;letter-spacing:-0.405px;color:#000;'>Source</span><span class="t" style='left:386.60px;top:337.50px;line-height:16px;font-size:12px;letter-spacing:0.032px;color:#000;'>Alt+Shift+S</span><svg class="abs" style="left:451px;top:342.0px" width="6" height="8" viewBox="0 0 6 8"><path d="M1 .6l3.400 3.400-3.400 3.400" fill="none" stroke="#333" stroke-width="1"/></svg><span class="t" style='left:151.50px;top:359.50px;line-height:16px;font-size:12px;letter-spacing:-0.245px;color:#000;'>Refactor</span><span class="t" style='left:385.60px;top:359.50px;line-height:16px;font-size:12px;letter-spacing:0.184px;color:#000;'>Alt+Shift+T</span><svg class="abs" style="left:451px;top:364.0px" width="6" height="8" viewBox="0 0 6 8"><path d="M1 .6l3.400 3.400-3.400 3.400" fill="none" stroke="#333" stroke-width="1"/></svg><div class="abs" style="left:147px;top:380px;width:318px;height:1px;background:#d0d0d0"></div><div class="ic" style="left:123px;top:386px;"><svg width="16" height="16" viewBox="0 0 16 16"><g transform="translate(-1 0)"><path d="M.5 8.500v6h14v-6h-3.500v3h-7v-3z" fill="#d3e1f3" stroke="#6f90c0" stroke-width=".9"/><path d="M2.500 1.500l5.500 6" stroke="#5577a8" stroke-width="1"/><path d="M9.600 9.200l-.8-4.200-3 2.800z" fill="#2f4f86"/></g></svg></div><span class="t" style='left:151.50px;top:385.50px;line-height:16px;font-size:12px;letter-spacing:-0.002px;color:#000;'>Import...</span><div class="ic" style="left:123px;top:408px;"><svg width="16" height="16" viewBox="0 0 16 16"><g transform="translate(-1 0)"><path d="M.5 8.500v6h14v-6h-3.500v3h-7v-3z" fill="#d3e1f3" stroke="#6f90c0" stroke-width=".9"/><path d="M3.500 3l6.500 7" stroke="#5577a8" stroke-width="1"/><path d="M1.800 1l.8 4.200 3-2.800z" fill="#2f4f86"/></g></svg></div><span class="t" style='left:151.50px;top:407.50px;line-height:16px;font-size:12px;letter-spacing:-0.387px;color:#000;'>Export...</span><div class="abs" style="left:147px;top:428px;width:318px;height:1px;background:#d0d0d0"></div><div class="ic" style="left:123px;top:434px;"><svg width="16" height="16" viewBox="0 0 16 16"><g transform="translate(8 8) scale(1.22) translate(-8 -8)"><path d="M2.200 8.600c-.8-3 1.400-5.300 4.200-5.300 1 0 1.800.3 2.500.8l1.300-1.600.7 5-4.900-.4 1.400-1.500c-1.600-.8-3.800.2-3.300 2.700z" fill="#f9cf55" stroke="#d8981c" stroke-width=".7" stroke-linejoin="round"/><path d="M13.800 7.400c.8 3-1.400 5.300-4.200 5.300-1 0-1.800-.3-2.500-.8l-1.300 1.600-.7-5 4.900.4-1.400 1.500c1.600.8 3.800-.2 3.300-2.700z" fill="#f9cf55" stroke="#d8981c" stroke-width=".7" stroke-linejoin="round"/></g></svg></div><span class="t" style='left:151.50px;top:433.50px;line-height:16px;font-size:12px;letter-spacing:-0.590px;color:#000;'>Refresh</span><span class="t" style='left:435.70px;top:433.50px;line-height:16px;font-size:12px;letter-spacing:-1.358px;color:#000;'>F5</span><span class="t" style='left:151.50px;top:455.50px;line-height:16px;font-size:12px;letter-spacing:-0.213px;color:#000;'>Close Project</span><span class="t" style='left:151.50px;top:477.50px;line-height:16px;font-size:12px;letter-spacing:-0.222px;color:#000;'>Close Unrelated Projects</span><span class="t" style='left:151.50px;top:499.50px;line-height:16px;font-size:12px;letter-spacing:-0.245px;color:#000;'>Assign Working Sets...</span><div class="ic" style="left:123px;top:522px;"><svg width="16" height="16" viewBox="0 0 16 16"><path d="M1.500 3.500h5v9h-5z" fill="#f4f8ee" stroke="#6d8f4a" stroke-width=".9"/><path d="M2.800 5.500h2.400M2.800 7.500h2.400" stroke="#6d8f4a" stroke-width=".8"/><path d="M7.500 1.500h4.500l2.500 2.500v6.500h-7z" fill="#f4f8ee" stroke="#5d8a3a" stroke-width=".9"/><path d="M9 5.500h4M9 7.500h4" stroke="#5d8a3a" stroke-width=".8"/><path d="M2 13.500h5v1.800h-5z" fill="#d8d8e2" stroke="#8a8a9a" stroke-width=".7"/></svg></div><span class="t" style='left:151.50px;top:521.50px;line-height:16px;font-size:12px;letter-spacing:-0.192px;color:#000;'>Mark as Deployable</span><div class="abs" style="left:147px;top:542px;width:318px;height:1px;background:#d0d0d0"></div><div class="abs" style="left:119px;top:545px;width:342px;height:20px;background:#d5e9fb;border:1px solid #3f9ede"></div><span class="t" style='left:151.50px;top:547.50px;line-height:16px;font-size:12px;letter-spacing:-0.417px;color:#000;'>Run As</span><svg class="abs" style="left:451px;top:552.0px" width="6" height="8" viewBox="0 0 6 8"><path d="M1 .6l3.400 3.400-3.400 3.400" fill="none" stroke="#333" stroke-width="1"/></svg><span class="t" style='left:151.50px;top:569.50px;line-height:16px;font-size:12px;letter-spacing:-0.231px;color:#000;'>Debug As</span><svg class="abs" style="left:451px;top:574.0px" width="6" height="8" viewBox="0 0 6 8"><path d="M1 .6l3.400 3.400-3.400 3.400" fill="none" stroke="#333" stroke-width="1"/></svg><span class="t" style='left:151.50px;top:591.50px;line-height:16px;font-size:12px;letter-spacing:-0.160px;color:#000;'>Profile As</span><svg class="abs" style="left:451px;top:596.0px" width="6" height="8" viewBox="0 0 6 8"><path d="M1 .6l3.400 3.400-3.400 3.400" fill="none" stroke="#333" stroke-width="1"/></svg><span class="t" style='left:151.50px;top:613.50px;line-height:16px;font-size:12px;letter-spacing:-0.248px;color:#000;'>Validate</span><span class="t" style='left:151.50px;top:635.50px;line-height:16px;font-size:12px;letter-spacing:-0.102px;color:#000;'>Restore from Local History...</span><span class="t" style='left:151.50px;top:657.50px;line-height:16px;font-size:12px;letter-spacing:-0.206px;color:#000;'>Maven</span><svg class="abs" style="left:451px;top:662.0px" width="6" height="8" viewBox="0 0 6 8"><path d="M1 .6l3.400 3.400-3.400 3.400" fill="none" stroke="#333" stroke-width="1"/></svg><span class="t" style='left:151.50px;top:679.50px;line-height:16px;font-size:12px;letter-spacing:-0.648px;color:#000;'>Java EE Tools</span><svg class="abs" style="left:451px;top:684.0px" width="6" height="8" viewBox="0 0 6 8"><path d="M1 .6l3.400 3.400-3.400 3.400" fill="none" stroke="#333" stroke-width="1"/></svg><span class="t" style='left:151.50px;top:701.50px;line-height:16px;font-size:12px;letter-spacing:-0.336px;color:#000;'>Team</span><svg class="abs" style="left:451px;top:706.0px" width="6" height="8" viewBox="0 0 6 8"><path d="M1 .6l3.400 3.400-3.400 3.400" fill="none" stroke="#333" stroke-width="1"/></svg><span class="t" style='left:151.50px;top:723.50px;line-height:16px;font-size:12px;letter-spacing:-0.041px;color:#000;'>Compare With</span><svg class="abs" style="left:451px;top:728.0px" width="6" height="8" viewBox="0 0 6 8"><path d="M1 .6l3.400 3.400-3.400 3.400" fill="none" stroke="#333" stroke-width="1"/></svg><span class="t" style='left:151.50px;top:745.50px;line-height:16px;font-size:12px;letter-spacing:-0.265px;color:#000;'>Replace With</span><svg class="abs" style="left:451px;top:750.0px" width="6" height="8" viewBox="0 0 6 8"><path d="M1 .6l3.400 3.400-3.400 3.400" fill="none" stroke="#333" stroke-width="1"/></svg><span class="t" style='left:151.50px;top:767.50px;line-height:16px;font-size:12px;letter-spacing:-0.344px;color:#000;'>JPA Tools</span><svg class="abs" style="left:451px;top:772.0px" width="6" height="8" viewBox="0 0 6 8"><path d="M1 .6l3.400 3.400-3.400 3.400" fill="none" stroke="#333" stroke-width="1"/></svg><span class="t" style='left:151.50px;top:789.50px;line-height:16px;font-size:12px;letter-spacing:0.063px;color:#000;'>Configure</span><svg class="abs" style="left:451px;top:794.0px" width="6" height="8" viewBox="0 0 6 8"><path d="M1 .6l3.400 3.400-3.400 3.400" fill="none" stroke="#333" stroke-width="1"/></svg><div class="abs" style="left:147px;top:810px;width:318px;height:1px;background:#d0d0d0"></div><span class="t" style='left:151.50px;top:815.50px;line-height:16px;font-size:12px;letter-spacing:-0.250px;color:#000;'>Properties</span><span class="t" style='left:397.50px;top:815.50px;line-height:16px;font-size:12px;letter-spacing:-0.023px;color:#000;'>Alt+Enter</span><div class="abs" style="left:147px;top:836px;width:318px;height:1px;background:#d0d0d0"></div><div class="abs" style="left:462px;top:543px;width:306px;height:249px;background:#f0f0f0;border:1px solid #a0a0a0;box-shadow:3px 3px 2.500px 0 rgba(0,0,0,.46)"></div><div class="abs" style="left:492px;top:545px;width:1px;height:246px;background:#d7d7d7"></div><div class="ic" style="left:468px;top:548px;"><svg width="16" height="16" viewBox="0 0 16 16"><path d="M7.500 1.500h7v13h-7z" fill="#e9ece4" stroke="#979f8c" stroke-width=".9"/><path d="M8.500 2.500h5v3h-5z" fill="#8fcf84" stroke="#5f9a54" stroke-width=".5"/><rect x="10" y="3.300" width="1.500" height="1.200" fill="#2f6a2a"/><path d="M8.500 7.500h5" stroke="#979f8c" stroke-width=".9"/><path d="M8.500 9h5v4.500h-5z" fill="#c8c8dc"/><path d="M2 9.500v6l6-3z" fill="#4fb85a" stroke="#2a8a38" stroke-width=".8" stroke-linejoin="round"/></svg></div><span class="t" style='left:497.50px;top:548.20px;line-height:16px;font-size:12px;letter-spacing:-0.393px;color:#000;'>1 Run on Server</span><span class="t" style='left:674.20px;top:548.20px;line-height:16px;font-size:12px;letter-spacing:-0.041px;color:#000;'>Alt+Shift+X, R</span><div class="ic" style="left:468px;top:570px;"><svg width="16" height="16" viewBox="0 0 16 16"><g transform="translate(0 -2)"><path d="M1.500 4.500h13v10.500h-13z" fill="#fafbfe" stroke="#9a9c98" stroke-width=".9"/><path d="M1.500 4.500h13v2h-13z" fill="#9dbbe6" stroke="#7f9fd0" stroke-width=".6"/><path d="M2 7.500l2 2.500 1.500-1.500 1.500 1.500 2-2.500v2l-3.500 2-3.500-2z" fill="#d88a30"/><text x="9" y="13.600" font-family="Liberation Sans, sans-serif" font-weight="700" font-size="8" fill="#2f5fae">J</text></g></svg></div><span class="t" style='left:497.50px;top:570.20px;line-height:16px;font-size:12px;letter-spacing:-0.289px;color:#000;'>2 Java Applet</span><span class="t" style='left:673.30px;top:570.20px;line-height:16px;font-size:12px;letter-spacing:0.118px;color:#000;'>Alt+Shift+X, A</span><div class="ic" style="left:468px;top:592px;"><svg width="16" height="16" viewBox="0 0 16 16"><g transform="translate(0 -2)"><path d="M1.500 4.500h13v11h-13z" fill="#fafbfe" stroke="#9a9c98" stroke-width=".9"/><path d="M1.500 4.500h13v2h-13z" fill="#9dbbe6" stroke="#7f9fd0" stroke-width=".6"/><text x="5.600" y="14" font-family="Liberation Sans, sans-serif" font-weight="700" font-size="8" fill="#2f5fae">J</text></g></svg></div><span class="t" style='left:497.50px;top:592.20px;line-height:16px;font-size:12px;letter-spacing:-0.152px;color:#000;'>3 Java Application</span><span class="t" style='left:677.00px;top:592.20px;line-height:16px;font-size:12px;letter-spacing:-0.050px;color:#000;'>Alt+Shift+X, J</span><span class="t" style='left:468.70px;top:614.00px;line-height:16px;font-size:11.5px;letter-spacing:-1.213px;color:#ea1c24;font-weight:700;'>m2</span><span class="t" style='left:497.50px;top:614.20px;line-height:16px;font-size:12px;letter-spacing:-0.055px;color:#000;'>4 Maven build</span><span class="t" style='left:670.20px;top:614.20px;line-height:16px;font-size:12px;letter-spacing:0.150px;color:#000;'>Alt+Shift+X, M</span><span class="t" style='left:468.70px;top:636.00px;line-height:16px;font-size:11.5px;letter-spacing:-1.213px;color:#ea1c24;font-weight:700;'>m2</span><span class="t" style='left:497.50px;top:636.20px;line-height:16px;font-size:12px;letter-spacing:-0.082px;color:#000;'>5 Maven build...</span><span class="t" style='left:468.70px;top:658.00px;line-height:16px;font-size:11.5px;letter-spacing:-1.213px;color:#ea1c24;font-weight:700;'>m2</span><span class="t" style='left:497.50px;top:658.20px;line-height:16px;font-size:12px;letter-spacing:-0.234px;color:#000;'>6 Maven clean</span><span class="t" style='left:468.70px;top:680.00px;line-height:16px;font-size:11.5px;letter-spacing:-1.213px;color:#ea1c24;font-weight:700;'>m2</span><span class="t" style='left:497.50px;top:680.20px;line-height:16px;font-size:12px;letter-spacing:-0.133px;color:#000;'>7 Maven clean verify</span><span class="t" style='left:468.70px;top:702.00px;line-height:16px;font-size:11.5px;letter-spacing:-1.213px;color:#ea1c24;font-weight:700;'>m2</span><span class="t" style='left:497.50px;top:702.20px;line-height:16px;font-size:12px;letter-spacing:-0.185px;color:#000;'>8 Maven generate-sources</span><span class="t" style='left:468.70px;top:724.00px;line-height:16px;font-size:11.5px;letter-spacing:-1.213px;color:#ea1c24;font-weight:700;'>m2</span><span class="t" style='left:497.50px;top:724.20px;line-height:16px;font-size:12px;letter-spacing:-0.136px;color:#000;'>9 Maven install</span><div class="abs" style="left:465px;top:743px;width:300px;height:20px;background:#d5e9fb;border:1px solid #3f9ede"></div><span class="t" style='left:468.70px;top:746.00px;line-height:16px;font-size:11.5px;letter-spacing:-1.213px;color:#ea1c24;font-weight:700;'>m2</span><span class="t" style='left:497.50px;top:746.20px;line-height:16px;font-size:12px;letter-spacing:-0.140px;color:#000;'>Maven test</span><div class="abs" style="left:493px;top:767px;width:274px;height:1px;background:#d0d0d0"></div><span class="t" style='left:497.50px;top:772.20px;line-height:16px;font-size:12px;letter-spacing:-0.083px;color:#000;'>Run Configurations...</span><svg class="abs" style="left:640px;top:740px" width="490" height="30" viewBox="640 740 490 30"><path d="M660 753.900L1119.300 761.400" stroke="#ee151c" stroke-width="3.200" stroke-linecap="round" fill="none"/><path d="M647.300 753.800l14.500-4.800-.2 9.800z" fill="#ee151c"/></svg>
</body></html>
